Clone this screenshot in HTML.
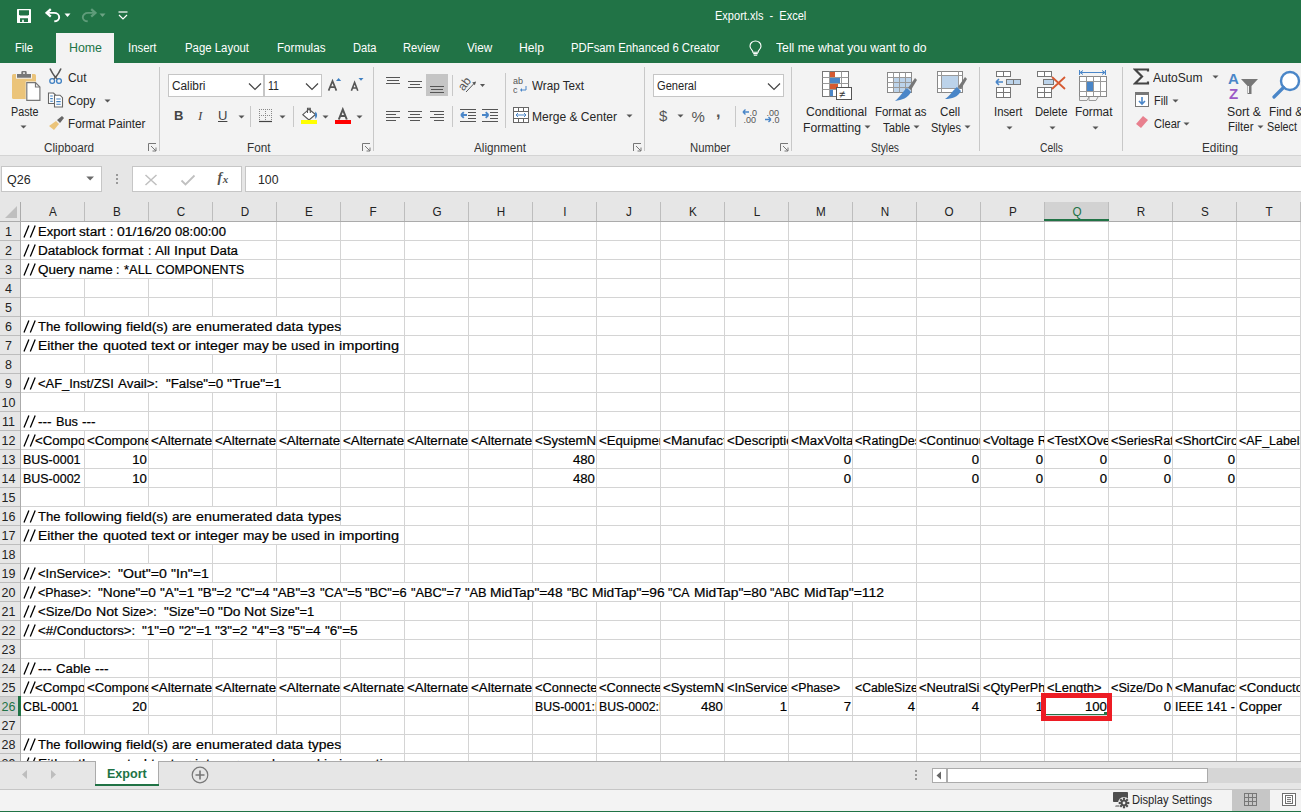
<!DOCTYPE html>
<html><head><meta charset="utf-8"><style>
html,body{margin:0;padding:0;width:1301px;height:812px;overflow:hidden;background:#fff;}
body{position:relative;font-family:"Liberation Sans",sans-serif;}
body div, body svg{position:absolute;}
body div div{position:absolute;}
</style></head><body>
<div style="left:0px;top:0px;width:1301px;height:63px;background:#217346;"></div>
<svg style="left:16px;top:8px;" width="16" height="16" viewBox="0 0 16 16"><rect x="1" y="1" width="14" height="14" rx="0.6" fill="#fff"/><path d="M3 2.2 H13 V6.6 L12 7.6 H4 L3 6.6 Z" fill="#217346"/><path d="M4 10.2 H12 V14 H7.8 V11.8 H6.2 V14 H4 Z" fill="#217346"/></svg>
<svg style="left:45px;top:8px;" width="17" height="16" viewBox="0 0 17 16"><path d="M5.8 1.2 L1.6 4.9 L5.8 8.6" fill="none" stroke="#fff" stroke-width="2.3" stroke-linejoin="miter"/><path d="M2.5 4.9 H9 C12 4.9 14.2 6.8 14.2 9.2 C14.2 11.6 12 13.3 9.3 13.3" fill="none" stroke="#fff" stroke-width="1.9"/></svg>
<svg style="left:64px;top:13px;" width="7" height="5" viewBox="0 0 7 5"><path d="M0.5 0.5 H6.5 L3.5 4 Z" fill="#fff"/></svg>
<svg style="left:80px;top:8px;" width="17" height="16" viewBox="0 0 17 16"><path d="M11.2 1.2 L15.4 4.9 L11.2 8.6" fill="none" stroke="#5f9c7a" stroke-width="2.3" stroke-linejoin="miter"/><path d="M14.5 4.9 H8 C5 4.9 2.8 6.8 2.8 9.2 C2.8 11.6 5 13.3 7.7 13.3" fill="none" stroke="#5f9c7a" stroke-width="1.9"/></svg>
<svg style="left:99px;top:13px;" width="7" height="5" viewBox="0 0 7 5"><path d="M0.5 0.5 H6.5 L3.5 4 Z" fill="#6da384"/></svg>
<svg style="left:118px;top:11px;" width="10" height="9" viewBox="0 0 10 9"><path d="M0.5 1 H9.5" stroke="#fff" stroke-width="1.2"/><path d="M1 4 L5 8 L9 4" fill="none" stroke="#fff" stroke-width="1.2"/></svg>
<div style="top:10.24px;font-size:12px;line-height:12px;color:#fff;white-space:pre;left:715.20px;transform:scaleX(0.9189);transform-origin:0 0;">Export.xls  -  Excel</div>
<div style="left:56px;top:33px;width:58px;height:30px;background:#f3f3f3;"></div>
<div style="top:42.14px;font-size:12px;line-height:12px;color:#fff;white-space:pre;left:15.00px;transform:scaleX(0.9310);transform-origin:0 0;">File</div>
<div style="top:42.14px;font-size:12px;line-height:12px;color:#217346;white-space:pre;left:68.50px;transform:scaleX(1.0309);transform-origin:0 0;">Home</div>
<div style="top:42.14px;font-size:12px;line-height:12px;color:#fff;white-space:pre;left:128.00px;transform:scaleX(0.9496);transform-origin:0 0;">Insert</div>
<div style="top:42.14px;font-size:12px;line-height:12px;color:#fff;white-space:pre;left:184.50px;transform:scaleX(0.9497);transform-origin:0 0;">Page Layout</div>
<div style="top:42.14px;font-size:12px;line-height:12px;color:#fff;white-space:pre;left:276.50px;transform:scaleX(0.9698);transform-origin:0 0;">Formulas</div>
<div style="top:42.14px;font-size:12px;line-height:12px;color:#fff;white-space:pre;left:352.50px;transform:scaleX(0.9271);transform-origin:0 0;">Data</div>
<div style="top:42.14px;font-size:12px;line-height:12px;color:#fff;white-space:pre;left:403.30px;transform:scaleX(0.9328);transform-origin:0 0;">Review</div>
<div style="top:42.14px;font-size:12px;line-height:12px;color:#fff;white-space:pre;left:466.80px;transform:scaleX(0.9770);transform-origin:0 0;">View</div>
<div style="top:42.14px;font-size:12px;line-height:12px;color:#fff;white-space:pre;left:519.00px;transform:scaleX(1.0130);transform-origin:0 0;">Help</div>
<div style="top:42.14px;font-size:12px;line-height:12px;color:#fff;white-space:pre;left:571.20px;transform:scaleX(0.9441);transform-origin:0 0;">PDFsam Enhanced 6 Creator</div>
<svg style="left:749px;top:40px;" width="13" height="16" viewBox="0 0 13 16"><path d="M6.5 1 C3.2 1 1 3.3 1 6.2 C1 8.4 2.4 9.6 3.6 11 L3.8 12.2 H9.2 L9.4 11 C10.6 9.6 12 8.4 12 6.2 C12 3.3 9.8 1 6.5 1 Z" fill="none" stroke="#fff" stroke-width="1.1"/><path d="M4.2 13.6 H8.8 M4.8 15.2 H8.2" stroke="#fff" stroke-width="1.1"/></svg>
<div style="top:42.14px;font-size:12px;line-height:12px;color:#fff;white-space:pre;left:775.70px;transform:scaleX(1.0164);transform-origin:0 0;">Tell me what you want to do</div>
<div style="left:0px;top:63px;width:1301px;height:92px;background:#f3f3f3;"></div>
<div style="left:0px;top:155px;width:1301px;height:1px;background:#d4d4d4;"></div>
<div style="left:159px;top:67px;width:1px;height:84px;background:#c8c8c8;"></div>
<div style="left:373px;top:67px;width:1px;height:84px;background:#c8c8c8;"></div>
<div style="left:644px;top:67px;width:1px;height:84px;background:#c8c8c8;"></div>
<div style="left:791px;top:67px;width:1px;height:84px;background:#c8c8c8;"></div>
<div style="left:979px;top:67px;width:1px;height:84px;background:#c8c8c8;"></div>
<div style="left:1122px;top:67px;width:1px;height:84px;background:#c8c8c8;"></div>
<div style="top:141.64px;font-size:12px;line-height:12px;color:#333;white-space:pre;left:43.50px;transform:scaleX(0.9754);transform-origin:0 0;">Clipboard</div>
<div style="top:141.64px;font-size:12px;line-height:12px;color:#333;white-space:pre;left:246.50px;transform:scaleX(0.9787);transform-origin:0 0;">Font</div>
<div style="top:141.64px;font-size:12px;line-height:12px;color:#333;white-space:pre;left:474.00px;transform:scaleX(0.9745);transform-origin:0 0;">Alignment</div>
<div style="top:141.64px;font-size:12px;line-height:12px;color:#333;white-space:pre;left:689.70px;transform:scaleX(0.9442);transform-origin:0 0;">Number</div>
<div style="top:141.64px;font-size:12px;line-height:12px;color:#333;white-space:pre;left:871.00px;transform:scaleX(0.8568);transform-origin:0 0;">Styles</div>
<div style="top:141.64px;font-size:12px;line-height:12px;color:#333;white-space:pre;left:1039.50px;transform:scaleX(0.8624);transform-origin:0 0;">Cells</div>
<div style="top:141.64px;font-size:12px;line-height:12px;color:#333;white-space:pre;left:1201.50px;transform:scaleX(0.9812);transform-origin:0 0;">Editing</div>
<svg style="left:148px;top:143px;" width="9" height="9" viewBox="0 0 9 9"><path d="M0.5 8 V0.5 H8" fill="none" stroke="#777" stroke-width="1"/><path d="M3 3 L8 8 M8 4.5 V8 H4.5" fill="none" stroke="#777" stroke-width="1"/></svg>
<svg style="left:362px;top:143px;" width="9" height="9" viewBox="0 0 9 9"><path d="M0.5 8 V0.5 H8" fill="none" stroke="#777" stroke-width="1"/><path d="M3 3 L8 8 M8 4.5 V8 H4.5" fill="none" stroke="#777" stroke-width="1"/></svg>
<svg style="left:633px;top:143px;" width="9" height="9" viewBox="0 0 9 9"><path d="M0.5 8 V0.5 H8" fill="none" stroke="#777" stroke-width="1"/><path d="M3 3 L8 8 M8 4.5 V8 H4.5" fill="none" stroke="#777" stroke-width="1"/></svg>
<svg style="left:780px;top:143px;" width="9" height="9" viewBox="0 0 9 9"><path d="M0.5 8 V0.5 H8" fill="none" stroke="#777" stroke-width="1"/><path d="M3 3 L8 8 M8 4.5 V8 H4.5" fill="none" stroke="#777" stroke-width="1"/></svg>
<svg style="left:11px;top:70px;" width="30" height="32" viewBox="0 0 30 32"><rect x="1" y="4" width="24" height="25" rx="1.6" fill="#ebc47a"/><rect x="5" y="2.5" width="16" height="6.2" fill="#f3f3f3"/><path d="M6 4 H10.3 V2.2 Q10.3 1 11.5 1 H14.5 Q15.7 1 15.7 2.2 V4 H20 V7.7 H6 Z" fill="#777"/><rect x="12.2" y="2.3" width="1.6" height="1.6" fill="#fff"/><path d="M14.7 11.5 H26 L30 15.5 V31.5 H14.7 Z" fill="#f3f3f3"/><path d="M15.8 12.6 H24.5 L28.9 17 V30.4 H15.8 Z" fill="#fff" stroke="#777" stroke-width="1.2"/><path d="M24.5 12.6 V17 H28.9" fill="none" stroke="#777" stroke-width="1.2"/></svg>
<div style="top:106.04px;font-size:12px;line-height:12px;color:#262626;white-space:pre;left:10.50px;transform:scaleX(0.8962);transform-origin:0 0;">Paste</div>
<svg style="left:20px;top:125px;" width="7" height="5" viewBox="0 0 7 5"><path d="M0.5 0.5 H6.5 L3.5 3.5 Z" fill="#555"/></svg>
<svg style="left:47px;top:67px;" width="17" height="18" viewBox="0 0 17 18"><path d="M3 1.5 Q5 6 8.5 10.5 M14 1.5 Q12 6 8.5 10.5" fill="none" stroke="#555" stroke-width="1.6"/><circle cx="5.2" cy="14" r="2.4" fill="none" stroke="#3f7fc1" stroke-width="1.3"/><circle cx="12" cy="14" r="2.4" fill="none" stroke="#3f7fc1" stroke-width="1.3"/><path d="M6.8 12 L8.5 10.3 L10.2 12" fill="none" stroke="#555" stroke-width="1.2"/></svg>
<div style="top:72.04px;font-size:12px;line-height:12px;color:#262626;white-space:pre;left:67.50px;transform:scaleX(0.9907);transform-origin:0 0;">Cut</div>
<svg style="left:47px;top:92px;" width="17" height="16" viewBox="0 0 17 16"><path d="M1.5 1 H6.5 L8.3 2.8 V11.5 H1.5 Z" fill="#fff" stroke="#666" stroke-width="1.1"/><path d="M3.2 4 H5.8 M3.2 6.6 H5.8 M3.2 9.2 H5.8" stroke="#3f7fc1" stroke-width="1.1"/><path d="M7.5 3.2 H13 L15.5 5.7 V15 H7.5 Z" fill="#fff" stroke="#666" stroke-width="1.1"/><path d="M9.3 7 H13.7 M9.3 9.6 H13.7 M9.3 12.2 H13.7" stroke="#3f7fc1" stroke-width="1.1"/></svg>
<div style="top:94.94px;font-size:12px;line-height:12px;color:#262626;white-space:pre;left:67.50px;transform:scaleX(0.9817);transform-origin:0 0;">Copy</div>
<svg style="left:104px;top:99px;" width="7" height="5" viewBox="0 0 7 5"><path d="M0.5 0.5 H6.5 L3.5 3.5 Z" fill="#555"/></svg>
<svg style="left:48px;top:115px;" width="17" height="16" viewBox="0 0 17 16"><path d="M9 5 L14 1 L16 3 L12 8 Z" fill="#666"/><path d="M8 6 L11 9 L6 15 L1 11 Z" fill="#ebc47a"/></svg>
<div style="top:118.44px;font-size:12px;line-height:12px;color:#262626;white-space:pre;left:67.50px;transform:scaleX(0.9766);transform-origin:0 0;">Format Painter</div>
<div style="left:168px;top:74px;width:96px;height:23px;background:#fff;box-sizing:border-box;border:1px solid #c6c6c6;"></div>
<div style="left:264px;top:74px;width:58px;height:23px;background:#fff;box-sizing:border-box;border:1px solid #c6c6c6;"></div>
<div style="top:80.44px;font-size:12px;line-height:12px;color:#262626;white-space:pre;left:171.50px;transform:scaleX(0.9851);transform-origin:0 0;">Calibri</div>
<div style="top:80.44px;font-size:12px;line-height:12px;color:#262626;white-space:pre;left:268.00px;transform:scaleX(0.8831);transform-origin:0 0;">11</div>
<svg style="left:248px;top:82px;" width="14" height="9" viewBox="0 0 14 9"><path d="M1 1.5 L7 7.5 L13 1.5" fill="none" stroke="#444" stroke-width="1.2"/></svg>
<svg style="left:305px;top:82px;" width="14" height="9" viewBox="0 0 14 9"><path d="M1 1.5 L7 7.5 L13 1.5" fill="none" stroke="#444" stroke-width="1.2"/></svg>
<svg style="left:326px;top:76px;" width="17" height="16" viewBox="0 0 17 16"><path d="M2.6 14.6 L6.5 5 L10.4 14.6 M4.2 11.2 H8.8" fill="none" stroke="#555" stroke-width="1.7"/><path d="M10 5 L12.6 2 L15.2 5 Z" fill="#3f7fc1"/></svg>
<svg style="left:349px;top:76px;" width="16" height="16" viewBox="0 0 16 16"><path d="M2.4 14.8 L5.6 6.5 L8.8 14.8 M3.8 12 H7.4" fill="none" stroke="#555" stroke-width="1.6"/><path d="M9.5 2 H14.5 L12 4.8 Z" fill="#3f7fc1"/></svg>
<div style="left:174px;top:108px;font-size:13px;line-height:15px;font-weight:bold;color:#444">B</div>
<div style="left:198px;top:108px;font-size:13px;line-height:15px;font-style:italic;color:#444;font-family:'Liberation Serif',serif">I</div>
<div style="left:218px;top:108px;font-size:13px;line-height:15px;text-decoration:underline;color:#444">U</div>
<svg style="left:238px;top:115px;" width="7" height="5" viewBox="0 0 7 5"><path d="M0.5 0.5 H6.5 L3.5 3.5 Z" fill="#555"/></svg>
<svg style="left:279px;top:115px;" width="7" height="5" viewBox="0 0 7 5"><path d="M0.5 0.5 H6.5 L3.5 3.5 Z" fill="#555"/></svg>
<svg style="left:322px;top:115px;" width="7" height="5" viewBox="0 0 7 5"><path d="M0.5 0.5 H6.5 L3.5 3.5 Z" fill="#555"/></svg>
<svg style="left:356px;top:115px;" width="7" height="5" viewBox="0 0 7 5"><path d="M0.5 0.5 H6.5 L3.5 3.5 Z" fill="#555"/></svg>
<div style="left:250px;top:106px;width:1px;height:21px;background:#c8c8c8;"></div>
<div style="left:293px;top:106px;width:1px;height:21px;background:#c8c8c8;"></div>
<svg style="left:258px;top:108px;" width="15" height="15" viewBox="0 0 15 15"><path d="M1.5 1 V13 M7.5 1 V13 M13.5 1 V13 M1 1.5 H14 M1 7.5 H14" fill="none" stroke="#888" stroke-width="1" stroke-dasharray="1 1"/><path d="M1 13.5 H14" stroke="#444" stroke-width="1.2"/></svg>
<svg style="left:300px;top:106px;" width="20" height="20" viewBox="0 0 20 20"><path d="M9 3.2 L15.5 8.5 L9 14 L2.8 8.7 Z" fill="#fff" stroke="#555" stroke-width="1.1"/><path d="M7.5 7 V2.2 H10.3 V7" fill="none" stroke="#555" stroke-width="1.1"/><path d="M15.3 5.5 C17.5 7 17.8 10.5 15.4 13 L15 8.8 Z" fill="#3f7fc1"/><rect x="1" y="14" width="16" height="4" fill="#ffff00"/></svg>
<svg style="left:334px;top:107px;" width="18" height="18" viewBox="0 0 18 18"><path d="M4.8 12.5 L8.8 2.5 L12.8 12.5 M6.3 9 H11.3" fill="none" stroke="#555" stroke-width="2"/><rect x="1" y="13" width="16" height="4" fill="#ff0000"/></svg>
<svg style="left:386px;top:77px;" width="16" height="10" viewBox="0 0 16 10"><rect x="0" y="0" width="14" height="1" fill="#555"/><rect x="1" y="3" width="12" height="1" fill="#555"/><rect x="0" y="6" width="14" height="1" fill="#555"/></svg>
<svg style="left:408px;top:81px;" width="16" height="10" viewBox="0 0 16 10"><rect x="0" y="0" width="14" height="1" fill="#555"/><rect x="2" y="3" width="10" height="1" fill="#555"/><rect x="0" y="6" width="14" height="1" fill="#555"/></svg>
<div style="left:426px;top:74px;width:22px;height:22px;background:#c5c5c5;"></div>
<svg style="left:430px;top:86px;" width="16" height="10" viewBox="0 0 16 10"><rect x="0" y="0" width="14" height="1" fill="#555"/><rect x="1" y="3" width="12" height="1" fill="#555"/><rect x="0" y="6" width="14" height="1" fill="#555"/></svg>
<div style="left:452px;top:75px;width:1px;height:21px;background:#c8c8c8;"></div>
<svg style="left:459px;top:74px;" width="28" height="20" viewBox="0 0 28 20"><text x="0" y="0" font-size="12" fill="#555" transform="translate(4.4 17.6) rotate(-52)" font-family="Liberation Sans">ab</text><path d="M7 18 L16 8.5" fill="none" stroke="#555" stroke-width="1"/><path d="M17 7.5 L13.2 8.6 L15.9 11.3 Z" fill="#555"/><path d="M21 10 H26 L23.5 13 Z" fill="#555"/></svg>
<div style="left:505px;top:73px;width:1px;height:55px;background:#c8c8c8;"></div>
<svg style="left:513px;top:76px;" width="16" height="18" viewBox="0 0 16 18"><text x="0" y="8" font-size="9" fill="#555" font-family="Liberation Sans">ab</text><text x="0" y="17" font-size="9" fill="#555" font-family="Liberation Sans">c</text><path d="M8 14 H13 V10" fill="none" stroke="#4a86c8" stroke-width="1"/><path d="M7 14 L9 12 V16 Z" fill="#4a86c8"/></svg>
<div style="top:80.04px;font-size:12px;line-height:12px;color:#262626;white-space:pre;left:532.00px;transform:scaleX(0.9705);transform-origin:0 0;">Wrap Text</div>
<svg style="left:386px;top:111px;" width="16" height="13" viewBox="0 0 16 13"><rect x="0" y="0" width="14" height="1" fill="#555"/><rect x="0" y="3" width="10" height="1" fill="#555"/><rect x="0" y="6" width="14" height="1" fill="#555"/><rect x="0" y="9" width="10" height="1" fill="#555"/></svg>
<svg style="left:408px;top:111px;" width="16" height="13" viewBox="0 0 16 13"><rect x="0" y="0" width="14" height="1" fill="#555"/><rect x="2" y="3" width="10" height="1" fill="#555"/><rect x="0" y="6" width="14" height="1" fill="#555"/><rect x="2" y="9" width="10" height="1" fill="#555"/></svg>
<svg style="left:430px;top:111px;" width="16" height="13" viewBox="0 0 16 13"><rect x="0" y="0" width="14" height="1" fill="#555"/><rect x="4" y="3" width="10" height="1" fill="#555"/><rect x="0" y="6" width="14" height="1" fill="#555"/><rect x="4" y="9" width="10" height="1" fill="#555"/></svg>
<div style="left:452px;top:106px;width:1px;height:21px;background:#c8c8c8;"></div>
<svg style="left:460px;top:108px;" width="17" height="15" viewBox="0 0 17 15"><path d="M0 1.5 H16 M8 4.5 H16 M8 7.5 H16 M8 10.5 H16 M0 13.5 H16" stroke="#555" stroke-width="1"/><path d="M1 7 H7 M1 7 L3.8 4.2 M1 7 L3.8 9.8" stroke="#4a86c8" stroke-width="1.8" fill="none"/></svg>
<svg style="left:482px;top:108px;" width="17" height="15" viewBox="0 0 17 15"><path d="M0 1.5 H16 M8 4.5 H16 M8 7.5 H16 M8 10.5 H16 M0 13.5 H16" stroke="#555" stroke-width="1"/><path d="M0 7 H6.5 M6.5 7 L3.7 4.2 M6.5 7 L3.7 9.8" stroke="#4a86c8" stroke-width="1.8" fill="none"/></svg>
<svg style="left:513px;top:107px;" width="16" height="16" viewBox="0 0 16 16"><rect x="0.5" y="0.5" width="15" height="15" fill="#fff" stroke="#666"/><path d="M0.5 4.5 H15.5 M0.5 11.5 H15.5 M5.5 0.5 V4.5 M10.5 0.5 V4.5 M5.5 11.5 V15.5 M10.5 11.5 V15.5" stroke="#666" stroke-width="1"/><path d="M3 8 H13 M3 8 L5 6 M3 8 L5 10 M13 8 L11 6 M13 8 L11 10" stroke="#4a86c8" stroke-width="1" fill="none"/></svg>
<div style="top:111.44px;font-size:12px;line-height:12px;color:#262626;white-space:pre;left:532.00px;transform:scaleX(1.0035);transform-origin:0 0;">Merge &amp; Center</div>
<svg style="left:626px;top:114px;" width="7" height="5" viewBox="0 0 7 5"><path d="M0.5 0.5 H6.5 L3.5 3.5 Z" fill="#555"/></svg>
<div style="left:653px;top:74px;width:131px;height:23px;background:#fff;box-sizing:border-box;border:1px solid #c6c6c6;"></div>
<div style="top:80.44px;font-size:12px;line-height:12px;color:#262626;white-space:pre;left:656.50px;transform:scaleX(0.9253);transform-origin:0 0;">General</div>
<svg style="left:767px;top:82px;" width="14" height="9" viewBox="0 0 14 9"><path d="M1 1.5 L7 7.5 L13 1.5" fill="none" stroke="#444" stroke-width="1.2"/></svg>
<div style="left:659px;top:107px;font-size:15px;line-height:17px;color:#555">$</div>
<svg style="left:677px;top:114px;" width="7" height="5" viewBox="0 0 7 5"><path d="M0.5 0.5 H6.5 L3.5 3.5 Z" fill="#555"/></svg>
<div style="left:691.5px;top:107.5px;font-size:15px;line-height:17px;color:#555">%</div>
<div style="left:716px;top:103px;font-size:16px;line-height:17px;color:#555;font-weight:bold">,</div>
<div style="left:735px;top:106px;width:1px;height:21px;background:#c8c8c8;"></div>
<svg style="left:742px;top:108px;" width="17" height="16" viewBox="0 0 17 16"><path d="M1 4 H7 M1 4 L3.5 1.5 M1 4 L3.5 6.5" stroke="#4a86c8" stroke-width="1.4" fill="none"/><text x="7.5" y="8" font-size="9" fill="#555" font-family="Liberation Sans">.0</text><text x="1.5" y="15" font-size="9" fill="#555" font-family="Liberation Sans">.00</text></svg>
<svg style="left:764px;top:108px;" width="17" height="16" viewBox="0 0 17 16"><text x="2.5" y="8" font-size="9" fill="#555" font-family="Liberation Sans">.00</text><path d="M1 11.5 H7 M7 11.5 L4.5 9 M7 11.5 L4.5 14" stroke="#4a86c8" stroke-width="1.4" fill="none"/><text x="8" y="15" font-size="9" fill="#555" font-family="Liberation Sans">.0</text></svg>
<svg style="left:821px;top:70px;" width="32" height="32" viewBox="0 0 32 32"><rect x="1.5" y="1.5" width="26" height="25" fill="#fff" stroke="#777"/><path d="M1.5 7.5 H27.5 M1.5 13.5 H27.5 M1.5 19.5 H27.5 M8.5 1.5 V26.5 M20.5 1.5 V26.5" stroke="#999" stroke-width="1"/><rect x="9" y="2" width="5" height="5" fill="#d65a32"/><rect x="9" y="8" width="10" height="5" fill="#4a86c8"/><rect x="9" y="14" width="8" height="5" fill="#d65a32"/><rect x="9" y="20" width="3" height="6" fill="#4a86c8"/><rect x="15.5" y="17.5" width="15" height="12" fill="#fff" stroke="#555"/><text x="18" y="28" font-size="11" fill="#333" font-family="Liberation Sans">&#8800;</text></svg>
<div style="top:106.24px;font-size:12px;line-height:12px;color:#262626;white-space:pre;left:805.50px;transform:scaleX(1.0160);transform-origin:0 0;">Conditional</div>
<div style="top:122.44px;font-size:12px;line-height:12px;color:#262626;white-space:pre;left:802.50px;transform:scaleX(1.0113);transform-origin:0 0;">Formatting</div>
<svg style="left:864px;top:125px;" width="7" height="5" viewBox="0 0 7 5"><path d="M0.5 0.5 H6.5 L3.5 3.5 Z" fill="#555"/></svg>
<svg style="left:886px;top:71px;" width="32" height="31" viewBox="0 0 32 31"><rect x="1.5" y="1.5" width="24" height="20" fill="#fff" stroke="#888"/><rect x="7" y="7" width="18" height="14" fill="#bcd3ea"/><path d="M1.5 6.5 H25.5 M1.5 11.5 H25.5 M1.5 16.5 H25.5 M7.5 1.5 V21.5 M13.5 1.5 V21.5 M19.5 1.5 V21.5" stroke="#999" stroke-width="1"/><path d="M22 17 L29 7 L31 9 L25 19 Z" fill="#777"/><path d="M21 17 L25 21 C22 27 16 29 9 30 C14 26 17 20 21 17 Z" fill="#4a86c8"/></svg>
<div style="top:106.24px;font-size:12px;line-height:12px;color:#262626;white-space:pre;left:874.50px;transform:scaleX(0.9535);transform-origin:0 0;">Format as</div>
<div style="top:122.44px;font-size:12px;line-height:12px;color:#262626;white-space:pre;left:883.00px;transform:scaleX(0.9412);transform-origin:0 0;">Table</div>
<svg style="left:913px;top:125px;" width="7" height="5" viewBox="0 0 7 5"><path d="M0.5 0.5 H6.5 L3.5 3.5 Z" fill="#555"/></svg>
<svg style="left:936px;top:70px;" width="32" height="30" viewBox="0 0 32 30"><rect x="1.5" y="1.5" width="25" height="21" fill="#fff" stroke="#888"/><rect x="6" y="6" width="16" height="12" fill="#bcd3ea"/><path d="M1.5 5.5 H26.5 M1.5 18.5 H26.5 M5.5 1.5 V22.5 M22.5 1.5 V22.5" stroke="#999" stroke-width="1"/><path d="M22 17 L29 7 L31 9 L25 19 Z" fill="#777"/><path d="M21 17 L25 21 C22 27 16 29 9 29 C14 26 17 20 21 17 Z" fill="#4a86c8"/></svg>
<div style="top:106.24px;font-size:12px;line-height:12px;color:#262626;white-space:pre;left:940.00px;transform:scaleX(0.9676);transform-origin:0 0;">Cell</div>
<div style="top:122.44px;font-size:12px;line-height:12px;color:#262626;white-space:pre;left:931.00px;transform:scaleX(0.9180);transform-origin:0 0;">Styles</div>
<svg style="left:964px;top:125px;" width="7" height="5" viewBox="0 0 7 5"><path d="M0.5 0.5 H6.5 L3.5 3.5 Z" fill="#555"/></svg>
<svg style="left:995px;top:70px;" width="28" height="29" viewBox="0 0 28 29"><rect x="1.5" y="1.5" width="14" height="5" fill="#fff" stroke="#777"/><path d="M8.5 1.5 V6.5" stroke="#777"/><rect x="11.5" y="9.5" width="14" height="5" fill="#bcd3ea" stroke="#777"/><path d="M18.5 9.5 V14.5" stroke="#777"/><path d="M1 12 H8 M1 12 L4 9 M1 12 L4 15" stroke="#4a86c8" stroke-width="1.6" fill="none"/><rect x="1.5" y="17.5" width="14" height="10" fill="#fff" stroke="#777"/><path d="M8.5 17.5 V27.5 M1.5 22.5 H15.5" stroke="#777"/></svg>
<div style="top:106.14px;font-size:12px;line-height:12px;color:#262626;white-space:pre;left:994.40px;transform:scaleX(0.9429);transform-origin:0 0;">Insert</div>
<svg style="left:1036px;top:70px;" width="31" height="30" viewBox="0 0 31 30"><rect x="1.5" y="1.5" width="14" height="5" fill="#fff" stroke="#777"/><path d="M8.5 1.5 V6.5" stroke="#777"/><rect x="7.5" y="9.5" width="10" height="5" fill="#bcd3ea" stroke="#777"/><rect x="1.5" y="17.5" width="14" height="10" fill="#fff" stroke="#777"/><path d="M8.5 17.5 V27.5 M1.5 22.5 H15.5" stroke="#777"/><path d="M16 7 L29 19 M29 7 L16 19" stroke="#d65a32" stroke-width="1.8"/></svg>
<div style="top:106.14px;font-size:12px;line-height:12px;color:#262626;white-space:pre;left:1034.50px;transform:scaleX(0.9370);transform-origin:0 0;">Delete</div>
<svg style="left:1078px;top:69px;" width="30" height="33" viewBox="0 0 30 33"><path d="M1.5 1 V6 M27.5 1 V6 M2 3.5 H27 M2 3.5 L5 1.5 M2 3.5 L5 5.5 M27 3.5 L24 1.5 M27 3.5 L24 5.5" stroke="#4a86c8" stroke-width="1" fill="none"/><rect x="1.5" y="7.5" width="27" height="20" fill="#fff" stroke="#888"/><path d="M1.5 12.5 H28.5 M1.5 22.5 H28.5 M8.5 7.5 V27.5 M15.5 7.5 V27.5 M22.5 7.5 V27.5" stroke="#999"/><rect x="9" y="13" width="6" height="9" fill="#4a86c8"/><path d="M1.5 27.5 V31.5 H9 L11 28 L11 31.5 H18 L20 28" fill="none" stroke="#999"/></svg>
<div style="top:106.14px;font-size:12px;line-height:12px;color:#262626;white-space:pre;left:1074.50px;transform:scaleX(0.9867);transform-origin:0 0;">Format</div>
<svg style="left:1006px;top:126px;" width="7" height="5" viewBox="0 0 7 5"><path d="M0.5 0.5 H6.5 L3.5 3.5 Z" fill="#555"/></svg>
<svg style="left:1049px;top:126px;" width="7" height="5" viewBox="0 0 7 5"><path d="M0.5 0.5 H6.5 L3.5 3.5 Z" fill="#555"/></svg>
<svg style="left:1092px;top:126px;" width="7" height="5" viewBox="0 0 7 5"><path d="M0.5 0.5 H6.5 L3.5 3.5 Z" fill="#555"/></svg>
<svg style="left:1133px;top:68px;" width="17" height="17" viewBox="0 0 17 17"><path d="M15 3.5 V1.5 H2 L9 8.5 L2 15.5 H15 V13.5" fill="none" stroke="#444" stroke-width="2.2"/></svg>
<div style="top:71.94px;font-size:12px;line-height:12px;color:#262626;white-space:pre;left:1153.00px;transform:scaleX(1.0028);transform-origin:0 0;">AutoSum</div>
<svg style="left:1212px;top:75px;" width="7" height="5" viewBox="0 0 7 5"><path d="M0.5 0.5 H6.5 L3.5 3.5 Z" fill="#555"/></svg>
<svg style="left:1134px;top:91px;" width="16" height="18" viewBox="0 0 16 18"><rect x="1.5" y="1.5" width="13" height="14" fill="#fff" stroke="#777"/><rect x="1" y="1" width="14" height="3" fill="#777"/><path d="M8 6 V13 M5 10 L8 13 L11 10" stroke="#4a86c8" stroke-width="1.6" fill="none"/></svg>
<div style="top:94.84px;font-size:12px;line-height:12px;color:#262626;white-space:pre;left:1153.50px;transform:scaleX(0.9134);transform-origin:0 0;">Fill</div>
<svg style="left:1172px;top:99px;" width="7" height="5" viewBox="0 0 7 5"><path d="M0.5 0.5 H6.5 L3.5 3.5 Z" fill="#555"/></svg>
<svg style="left:1134px;top:115px;" width="15" height="14" viewBox="0 0 15 14"><path d="M9 1 L14 5 L7 13 L2 9 Z" fill="#e8808e"/><path d="M1 9.5 L5 13" stroke="#f3f3f3" stroke-width="1.2"/></svg>
<div style="top:117.84px;font-size:12px;line-height:12px;color:#262626;white-space:pre;left:1153.50px;transform:scaleX(0.9241);transform-origin:0 0;">Clear</div>
<svg style="left:1183px;top:122px;" width="7" height="5" viewBox="0 0 7 5"><path d="M0.5 0.5 H6.5 L3.5 3.5 Z" fill="#555"/></svg>
<svg style="left:1228px;top:71px;" width="32" height="29" viewBox="0 0 32 29"><text x="0" y="12.5" font-size="15" font-weight="bold" fill="#4a86c8" font-family="Liberation Sans">A</text><text x="1" y="27.5" font-size="15" font-weight="bold" fill="#9b59c6" font-family="Liberation Sans">Z</text><path d="M13 8 H30 L23.5 15 V23 H19.5 V15 Z" fill="#777"/><path d="M20.5 15 V22" stroke="#f3f3f3" stroke-width="1"/></svg>
<div style="top:106.04px;font-size:12px;line-height:12px;color:#262626;white-space:pre;left:1227.00px;transform:scaleX(1.0195);transform-origin:0 0;">Sort &amp;</div>
<div style="top:121.44px;font-size:12px;line-height:12px;color:#262626;white-space:pre;left:1227.50px;transform:scaleX(0.9563);transform-origin:0 0;">Filter</div>
<svg style="left:1257px;top:125px;" width="7" height="5" viewBox="0 0 7 5"><path d="M0.5 0.5 H6.5 L3.5 3.5 Z" fill="#555"/></svg>
<svg style="left:1272px;top:70px;" width="29" height="30" viewBox="0 0 29 30"><circle cx="18" cy="11" r="9" fill="#fff" stroke="#4a86c8" stroke-width="2.4"/><path d="M11.5 17.5 L2 27" stroke="#4a86c8" stroke-width="3.2" stroke-linecap="round"/></svg>
<div style="top:106.04px;font-size:12px;line-height:12px;color:#262626;white-space:pre;left:1269.00px;transform:scaleX(0.9804);transform-origin:0 0;">Find &amp;</div>
<div style="top:121.44px;font-size:12px;line-height:12px;color:#262626;white-space:pre;left:1267.00px;transform:scaleX(0.8995);transform-origin:0 0;">Select</div>
<div style="left:0px;top:156px;width:1301px;height:46px;background:#e6e6e6;"></div>
<div style="left:1px;top:166px;width:101px;height:26px;background:#fff;box-sizing:border-box;border:1px solid #c6c6c6;"></div>
<div style="top:174.44px;font-size:12px;line-height:12px;color:#262626;white-space:pre;left:7.00px;transform:scaleX(1.0405);transform-origin:0 0;">Q26</div>
<svg style="left:85.5px;top:176px;" width="9" height="6" viewBox="0 0 9 6"><path d="M0.3 0.5 H8 L4.15 4.6 Z" fill="#6a6a6a"/></svg>
<div style="left:116px;top:174px;width:2px;height:2px;background:#999;"></div>
<div style="left:116px;top:178px;width:2px;height:2px;background:#999;"></div>
<div style="left:116px;top:182px;width:2px;height:2px;background:#999;"></div>
<div style="left:132px;top:166px;width:110px;height:26px;background:#fff;box-sizing:border-box;border:1px solid #c6c6c6;"></div>
<svg style="left:144px;top:174px;" width="14" height="12" viewBox="0 0 14 12"><path d="M1.5 1 L12.5 11 M12.5 1 L1.5 11" stroke="#c0c0c0" stroke-width="1.5"/></svg>
<svg style="left:180px;top:174px;" width="16" height="12" viewBox="0 0 16 12"><path d="M1.5 6.5 L5.5 10.5 L14.5 1.5" fill="none" stroke="#c0c0c0" stroke-width="1.8"/></svg>
<div style="left:217.5px;top:169.5px;font-size:14px;line-height:16px;font-style:italic;font-weight:bold;color:#505050;font-family:'Liberation Serif',serif">f<span style="font-size:11px;position:relative;top:1px;left:0.5px">x</span></div>
<div style="left:245px;top:166px;width:1056px;height:26px;background:#fff;box-sizing:border-box;border:1px solid #c6c6c6;border-right:none;"></div>
<div style="top:172.73px;font-size:13.2px;line-height:13.2px;color:#262626;white-space:pre;left:257.50px;transform:scaleX(0.9309);transform-origin:0 0;">100</div>
<div style="left:0px;top:202px;width:1301px;height:19px;background:#e6e6e6;"></div>
<div style="left:0px;top:221px;width:1301px;height:540px;background:#fff;"></div>
<div style="left:0px;top:222px;width:20px;height:539px;background:#e6e6e6;"></div>
<div style="left:20px;top:202px;width:1px;height:19px;background:#bdbdbd;"></div>
<div style="left:84px;top:202px;width:1px;height:19px;background:#bdbdbd;"></div>
<div style="left:148px;top:202px;width:1px;height:19px;background:#bdbdbd;"></div>
<div style="left:212px;top:202px;width:1px;height:19px;background:#bdbdbd;"></div>
<div style="left:276px;top:202px;width:1px;height:19px;background:#bdbdbd;"></div>
<div style="left:340px;top:202px;width:1px;height:19px;background:#bdbdbd;"></div>
<div style="left:404px;top:202px;width:1px;height:19px;background:#bdbdbd;"></div>
<div style="left:468px;top:202px;width:1px;height:19px;background:#bdbdbd;"></div>
<div style="left:532px;top:202px;width:1px;height:19px;background:#bdbdbd;"></div>
<div style="left:596px;top:202px;width:1px;height:19px;background:#bdbdbd;"></div>
<div style="left:660px;top:202px;width:1px;height:19px;background:#bdbdbd;"></div>
<div style="left:724px;top:202px;width:1px;height:19px;background:#bdbdbd;"></div>
<div style="left:788px;top:202px;width:1px;height:19px;background:#bdbdbd;"></div>
<div style="left:852px;top:202px;width:1px;height:19px;background:#bdbdbd;"></div>
<div style="left:916px;top:202px;width:1px;height:19px;background:#bdbdbd;"></div>
<div style="left:980px;top:202px;width:1px;height:19px;background:#bdbdbd;"></div>
<div style="left:1044px;top:202px;width:1px;height:19px;background:#bdbdbd;"></div>
<div style="left:1108px;top:202px;width:1px;height:19px;background:#bdbdbd;"></div>
<div style="left:1172px;top:202px;width:1px;height:19px;background:#bdbdbd;"></div>
<div style="left:1236px;top:202px;width:1px;height:19px;background:#bdbdbd;"></div>
<div style="left:1300px;top:202px;width:1px;height:19px;background:#bdbdbd;"></div>
<div style="left:0px;top:221px;width:1301px;height:1px;background:#ababab;"></div>
<div style="left:20px;top:202px;width:1px;height:559px;background:#ababab;"></div>
<svg style="left:4px;top:205px;" width="14" height="14" viewBox="0 0 14 14"><path d="M13 1 V13 H1 Z" fill="#bfbfbf"/></svg>
<div style="left:1045px;top:202px;width:63px;height:19px;background:#d2d2d2;"></div>
<div style="left:1044px;top:219px;width:65px;height:2px;background:#217346;"></div>
<div style="left:20.8px;top:204px;width:64px;text-align:center;font-size:13px;line-height:15px;color:#222;transform:scaleX(0.9)">A</div>
<div style="left:84.8px;top:204px;width:64px;text-align:center;font-size:13px;line-height:15px;color:#222;transform:scaleX(0.9)">B</div>
<div style="left:148.8px;top:204px;width:64px;text-align:center;font-size:13px;line-height:15px;color:#222;transform:scaleX(0.9)">C</div>
<div style="left:212.8px;top:204px;width:64px;text-align:center;font-size:13px;line-height:15px;color:#222;transform:scaleX(0.9)">D</div>
<div style="left:276.8px;top:204px;width:64px;text-align:center;font-size:13px;line-height:15px;color:#222;transform:scaleX(0.9)">E</div>
<div style="left:340.8px;top:204px;width:64px;text-align:center;font-size:13px;line-height:15px;color:#222;transform:scaleX(0.9)">F</div>
<div style="left:404.8px;top:204px;width:64px;text-align:center;font-size:13px;line-height:15px;color:#222;transform:scaleX(0.9)">G</div>
<div style="left:468.8px;top:204px;width:64px;text-align:center;font-size:13px;line-height:15px;color:#222;transform:scaleX(0.9)">H</div>
<div style="left:532.8px;top:204px;width:64px;text-align:center;font-size:13px;line-height:15px;color:#222;transform:scaleX(0.9)">I</div>
<div style="left:596.8px;top:204px;width:64px;text-align:center;font-size:13px;line-height:15px;color:#222;transform:scaleX(0.9)">J</div>
<div style="left:660.8px;top:204px;width:64px;text-align:center;font-size:13px;line-height:15px;color:#222;transform:scaleX(0.9)">K</div>
<div style="left:724.8px;top:204px;width:64px;text-align:center;font-size:13px;line-height:15px;color:#222;transform:scaleX(0.9)">L</div>
<div style="left:788.8px;top:204px;width:64px;text-align:center;font-size:13px;line-height:15px;color:#222;transform:scaleX(0.9)">M</div>
<div style="left:852.8px;top:204px;width:64px;text-align:center;font-size:13px;line-height:15px;color:#222;transform:scaleX(0.9)">N</div>
<div style="left:916.8px;top:204px;width:64px;text-align:center;font-size:13px;line-height:15px;color:#222;transform:scaleX(0.9)">O</div>
<div style="left:980.8px;top:204px;width:64px;text-align:center;font-size:13px;line-height:15px;color:#222;transform:scaleX(0.9)">P</div>
<div style="left:1044.8px;top:204px;width:64px;text-align:center;font-size:13px;line-height:15px;color:#217346;transform:scaleX(0.9)">Q</div>
<div style="left:1108.8px;top:204px;width:64px;text-align:center;font-size:13px;line-height:15px;color:#222;transform:scaleX(0.9)">R</div>
<div style="left:1172.8px;top:204px;width:64px;text-align:center;font-size:13px;line-height:15px;color:#222;transform:scaleX(0.9)">S</div>
<div style="left:1236.8px;top:204px;width:64px;text-align:center;font-size:13px;line-height:15px;color:#222;transform:scaleX(0.9)">T</div>
<div style="left:84px;top:222px;width:1px;height:539px;background:#d4d4d4;"></div>
<div style="left:148px;top:222px;width:1px;height:539px;background:#d4d4d4;"></div>
<div style="left:212px;top:222px;width:1px;height:539px;background:#d4d4d4;"></div>
<div style="left:276px;top:222px;width:1px;height:539px;background:#d4d4d4;"></div>
<div style="left:340px;top:222px;width:1px;height:539px;background:#d4d4d4;"></div>
<div style="left:404px;top:222px;width:1px;height:539px;background:#d4d4d4;"></div>
<div style="left:468px;top:222px;width:1px;height:539px;background:#d4d4d4;"></div>
<div style="left:532px;top:222px;width:1px;height:539px;background:#d4d4d4;"></div>
<div style="left:596px;top:222px;width:1px;height:539px;background:#d4d4d4;"></div>
<div style="left:660px;top:222px;width:1px;height:539px;background:#d4d4d4;"></div>
<div style="left:724px;top:222px;width:1px;height:539px;background:#d4d4d4;"></div>
<div style="left:788px;top:222px;width:1px;height:539px;background:#d4d4d4;"></div>
<div style="left:852px;top:222px;width:1px;height:539px;background:#d4d4d4;"></div>
<div style="left:916px;top:222px;width:1px;height:539px;background:#d4d4d4;"></div>
<div style="left:980px;top:222px;width:1px;height:539px;background:#d4d4d4;"></div>
<div style="left:1044px;top:222px;width:1px;height:539px;background:#d4d4d4;"></div>
<div style="left:1108px;top:222px;width:1px;height:539px;background:#d4d4d4;"></div>
<div style="left:1172px;top:222px;width:1px;height:539px;background:#d4d4d4;"></div>
<div style="left:1236px;top:222px;width:1px;height:539px;background:#d4d4d4;"></div>
<div style="left:1300px;top:222px;width:1px;height:539px;background:#d4d4d4;"></div>
<div style="left:21px;top:240px;width:1280px;height:1px;background:#d4d4d4;"></div>
<div style="left:0px;top:240px;width:20px;height:1px;background:#bdbdbd;"></div>
<div style="left:21px;top:259px;width:1280px;height:1px;background:#d4d4d4;"></div>
<div style="left:0px;top:259px;width:20px;height:1px;background:#bdbdbd;"></div>
<div style="left:21px;top:278px;width:1280px;height:1px;background:#d4d4d4;"></div>
<div style="left:0px;top:278px;width:20px;height:1px;background:#bdbdbd;"></div>
<div style="left:21px;top:297px;width:1280px;height:1px;background:#d4d4d4;"></div>
<div style="left:0px;top:297px;width:20px;height:1px;background:#bdbdbd;"></div>
<div style="left:21px;top:316px;width:1280px;height:1px;background:#d4d4d4;"></div>
<div style="left:0px;top:316px;width:20px;height:1px;background:#bdbdbd;"></div>
<div style="left:21px;top:335px;width:1280px;height:1px;background:#d4d4d4;"></div>
<div style="left:0px;top:335px;width:20px;height:1px;background:#bdbdbd;"></div>
<div style="left:21px;top:354px;width:1280px;height:1px;background:#d4d4d4;"></div>
<div style="left:0px;top:354px;width:20px;height:1px;background:#bdbdbd;"></div>
<div style="left:21px;top:373px;width:1280px;height:1px;background:#d4d4d4;"></div>
<div style="left:0px;top:373px;width:20px;height:1px;background:#bdbdbd;"></div>
<div style="left:21px;top:392px;width:1280px;height:1px;background:#d4d4d4;"></div>
<div style="left:0px;top:392px;width:20px;height:1px;background:#bdbdbd;"></div>
<div style="left:21px;top:411px;width:1280px;height:1px;background:#d4d4d4;"></div>
<div style="left:0px;top:411px;width:20px;height:1px;background:#bdbdbd;"></div>
<div style="left:21px;top:430px;width:1280px;height:1px;background:#d4d4d4;"></div>
<div style="left:0px;top:430px;width:20px;height:1px;background:#bdbdbd;"></div>
<div style="left:21px;top:449px;width:1280px;height:1px;background:#d4d4d4;"></div>
<div style="left:0px;top:449px;width:20px;height:1px;background:#bdbdbd;"></div>
<div style="left:21px;top:468px;width:1280px;height:1px;background:#d4d4d4;"></div>
<div style="left:0px;top:468px;width:20px;height:1px;background:#bdbdbd;"></div>
<div style="left:21px;top:487px;width:1280px;height:1px;background:#d4d4d4;"></div>
<div style="left:0px;top:487px;width:20px;height:1px;background:#bdbdbd;"></div>
<div style="left:21px;top:506px;width:1280px;height:1px;background:#d4d4d4;"></div>
<div style="left:0px;top:506px;width:20px;height:1px;background:#bdbdbd;"></div>
<div style="left:21px;top:525px;width:1280px;height:1px;background:#d4d4d4;"></div>
<div style="left:0px;top:525px;width:20px;height:1px;background:#bdbdbd;"></div>
<div style="left:21px;top:544px;width:1280px;height:1px;background:#d4d4d4;"></div>
<div style="left:0px;top:544px;width:20px;height:1px;background:#bdbdbd;"></div>
<div style="left:21px;top:563px;width:1280px;height:1px;background:#d4d4d4;"></div>
<div style="left:0px;top:563px;width:20px;height:1px;background:#bdbdbd;"></div>
<div style="left:21px;top:582px;width:1280px;height:1px;background:#d4d4d4;"></div>
<div style="left:0px;top:582px;width:20px;height:1px;background:#bdbdbd;"></div>
<div style="left:21px;top:601px;width:1280px;height:1px;background:#d4d4d4;"></div>
<div style="left:0px;top:601px;width:20px;height:1px;background:#bdbdbd;"></div>
<div style="left:21px;top:620px;width:1280px;height:1px;background:#d4d4d4;"></div>
<div style="left:0px;top:620px;width:20px;height:1px;background:#bdbdbd;"></div>
<div style="left:21px;top:639px;width:1280px;height:1px;background:#d4d4d4;"></div>
<div style="left:0px;top:639px;width:20px;height:1px;background:#bdbdbd;"></div>
<div style="left:21px;top:658px;width:1280px;height:1px;background:#d4d4d4;"></div>
<div style="left:0px;top:658px;width:20px;height:1px;background:#bdbdbd;"></div>
<div style="left:21px;top:677px;width:1280px;height:1px;background:#d4d4d4;"></div>
<div style="left:0px;top:677px;width:20px;height:1px;background:#bdbdbd;"></div>
<div style="left:21px;top:696px;width:1280px;height:1px;background:#d4d4d4;"></div>
<div style="left:0px;top:696px;width:20px;height:1px;background:#bdbdbd;"></div>
<div style="left:21px;top:715px;width:1280px;height:1px;background:#d4d4d4;"></div>
<div style="left:0px;top:715px;width:20px;height:1px;background:#bdbdbd;"></div>
<div style="left:21px;top:734px;width:1280px;height:1px;background:#d4d4d4;"></div>
<div style="left:0px;top:734px;width:20px;height:1px;background:#bdbdbd;"></div>
<div style="left:21px;top:753px;width:1280px;height:1px;background:#d4d4d4;"></div>
<div style="left:0px;top:753px;width:20px;height:1px;background:#bdbdbd;"></div>
<div style="left:0px;top:697px;width:20px;height:18px;background:#d2d2d2;"></div>
<div style="left:18px;top:696px;width:3px;height:20px;background:#217346;"></div>
<div style="left:-1.5px;top:225px;width:20px;text-align:center;font-size:12.5px;line-height:15px;color:#222">1</div>
<div style="left:-1.5px;top:244px;width:20px;text-align:center;font-size:12.5px;line-height:15px;color:#222">2</div>
<div style="left:-1.5px;top:263px;width:20px;text-align:center;font-size:12.5px;line-height:15px;color:#222">3</div>
<div style="left:-1.5px;top:282px;width:20px;text-align:center;font-size:12.5px;line-height:15px;color:#222">4</div>
<div style="left:-1.5px;top:301px;width:20px;text-align:center;font-size:12.5px;line-height:15px;color:#222">5</div>
<div style="left:-1.5px;top:320px;width:20px;text-align:center;font-size:12.5px;line-height:15px;color:#222">6</div>
<div style="left:-1.5px;top:339px;width:20px;text-align:center;font-size:12.5px;line-height:15px;color:#222">7</div>
<div style="left:-1.5px;top:358px;width:20px;text-align:center;font-size:12.5px;line-height:15px;color:#222">8</div>
<div style="left:-1.5px;top:377px;width:20px;text-align:center;font-size:12.5px;line-height:15px;color:#222">9</div>
<div style="left:-1.5px;top:396px;width:20px;text-align:center;font-size:12.5px;line-height:15px;color:#222">10</div>
<div style="left:-1.5px;top:415px;width:20px;text-align:center;font-size:12.5px;line-height:15px;color:#222">11</div>
<div style="left:-1.5px;top:434px;width:20px;text-align:center;font-size:12.5px;line-height:15px;color:#222">12</div>
<div style="left:-1.5px;top:453px;width:20px;text-align:center;font-size:12.5px;line-height:15px;color:#222">13</div>
<div style="left:-1.5px;top:472px;width:20px;text-align:center;font-size:12.5px;line-height:15px;color:#222">14</div>
<div style="left:-1.5px;top:491px;width:20px;text-align:center;font-size:12.5px;line-height:15px;color:#222">15</div>
<div style="left:-1.5px;top:510px;width:20px;text-align:center;font-size:12.5px;line-height:15px;color:#222">16</div>
<div style="left:-1.5px;top:529px;width:20px;text-align:center;font-size:12.5px;line-height:15px;color:#222">17</div>
<div style="left:-1.5px;top:548px;width:20px;text-align:center;font-size:12.5px;line-height:15px;color:#222">18</div>
<div style="left:-1.5px;top:567px;width:20px;text-align:center;font-size:12.5px;line-height:15px;color:#222">19</div>
<div style="left:-1.5px;top:586px;width:20px;text-align:center;font-size:12.5px;line-height:15px;color:#222">20</div>
<div style="left:-1.5px;top:605px;width:20px;text-align:center;font-size:12.5px;line-height:15px;color:#222">21</div>
<div style="left:-1.5px;top:624px;width:20px;text-align:center;font-size:12.5px;line-height:15px;color:#222">22</div>
<div style="left:-1.5px;top:643px;width:20px;text-align:center;font-size:12.5px;line-height:15px;color:#222">23</div>
<div style="left:-1.5px;top:662px;width:20px;text-align:center;font-size:12.5px;line-height:15px;color:#222">24</div>
<div style="left:-1.5px;top:681px;width:20px;text-align:center;font-size:12.5px;line-height:15px;color:#222">25</div>
<div style="left:-1.5px;top:700px;width:20px;text-align:center;font-size:12.5px;line-height:15px;color:#217346">26</div>
<div style="left:-1.5px;top:719px;width:20px;text-align:center;font-size:12.5px;line-height:15px;color:#222">27</div>
<div style="left:-1.5px;top:738px;width:20px;text-align:center;font-size:12.5px;line-height:15px;color:#222">28</div>
<div style="left:-1.5px;top:757px;width:20px;text-align:center;font-size:12.5px;line-height:15px;color:#222">29</div>
<div style="left:21px;top:222px;width:1280px;height:539px;overflow:hidden;">
<div style="left:0px;top:0px;width:255px;height:18px;background:#fff;"></div>
<svg style="left:1.5px;top:2.9000000000000057px;" width="14" height="13" viewBox="0 0 14 13"><path d="M1 12.6 L5.9 0.4 M7.3 12.6 L12.2 0.4" stroke="#000" stroke-width="1.3" fill="none"/></svg>
<div style="top:4.42px;font-size:12.5px;line-height:12.5px;color:#000;white-space:pre;left:16.96px;transform:scaleX(1.0433);transform-origin:0 0;-webkit-text-stroke:0.2px #000;">Export</div>
<div style="top:4.42px;font-size:12.5px;line-height:12.5px;color:#000;white-space:pre;left:58.49px;transform:scaleX(1.0948);transform-origin:0 0;-webkit-text-stroke:0.2px #000;">start</div>
<div style="top:4.42px;font-size:12.5px;line-height:12.5px;color:#000;white-space:pre;left:88.95px;transform:scaleX(0.9400);transform-origin:0 0;-webkit-text-stroke:0.2px #000;">:</div>
<div style="top:4.42px;font-size:12.5px;line-height:12.5px;color:#000;white-space:pre;left:96.07px;transform:scaleX(1.1174);transform-origin:0 0;-webkit-text-stroke:0.2px #000;">01/16/20</div>
<div style="top:4.42px;font-size:12.5px;line-height:12.5px;color:#000;white-space:pre;left:154.28px;transform:scaleX(1.0466);transform-origin:0 0;-webkit-text-stroke:0.2px #000;">08:00:00</div>
<div style="left:0px;top:19px;width:255px;height:18px;background:#fff;"></div>
<svg style="left:1.5px;top:21.900000000000006px;" width="14" height="13" viewBox="0 0 14 13"><path d="M1 12.6 L5.9 0.4 M7.3 12.6 L12.2 0.4" stroke="#000" stroke-width="1.3" fill="none"/></svg>
<div style="top:23.42px;font-size:12.5px;line-height:12.5px;color:#000;white-space:pre;left:17.09px;transform:scaleX(1.0851);transform-origin:0 0;-webkit-text-stroke:0.2px #000;">Datablock</div>
<div style="top:23.42px;font-size:12.5px;line-height:12.5px;color:#000;white-space:pre;left:81.40px;transform:scaleX(1.1640);transform-origin:0 0;-webkit-text-stroke:0.2px #000;">format</div>
<div style="top:23.42px;font-size:12.5px;line-height:12.5px;color:#000;white-space:pre;left:126.63px;transform:scaleX(0.9774);transform-origin:0 0;-webkit-text-stroke:0.2px #000;">:</div>
<div style="top:23.42px;font-size:12.5px;line-height:12.5px;color:#000;white-space:pre;left:134.02px;transform:scaleX(1.0747);transform-origin:0 0;-webkit-text-stroke:0.2px #000;">All</div>
<div style="top:23.42px;font-size:12.5px;line-height:12.5px;color:#000;white-space:pre;left:152.95px;transform:scaleX(1.1433);transform-origin:0 0;-webkit-text-stroke:0.2px #000;">Input</div>
<div style="top:23.42px;font-size:12.5px;line-height:12.5px;color:#000;white-space:pre;left:188.73px;transform:scaleX(1.0592);transform-origin:0 0;-webkit-text-stroke:0.2px #000;">Data</div>
<div style="left:0px;top:38px;width:255px;height:18px;background:#fff;"></div>
<svg style="left:1.5px;top:40.89999999999998px;" width="14" height="13" viewBox="0 0 14 13"><path d="M1 12.6 L5.9 0.4 M7.3 12.6 L12.2 0.4" stroke="#000" stroke-width="1.3" fill="none"/></svg>
<div style="top:42.42px;font-size:12.5px;line-height:12.5px;color:#000;white-space:pre;left:17.07px;transform:scaleX(1.0767);transform-origin:0 0;-webkit-text-stroke:0.2px #000;">Query</div>
<div style="top:42.42px;font-size:12.5px;line-height:12.5px;color:#000;white-space:pre;left:57.71px;transform:scaleX(1.0785);transform-origin:0 0;-webkit-text-stroke:0.2px #000;">name</div>
<div style="top:42.42px;font-size:12.5px;line-height:12.5px;color:#000;white-space:pre;left:95.41px;transform:scaleX(0.9738);transform-origin:0 0;-webkit-text-stroke:0.2px #000;">:</div>
<div style="top:42.42px;font-size:12.5px;line-height:12.5px;color:#000;white-space:pre;left:102.78px;transform:scaleX(1.0328);transform-origin:0 0;-webkit-text-stroke:0.2px #000;">*ALL</div>
<div style="top:42.42px;font-size:12.5px;line-height:12.5px;color:#000;white-space:pre;left:134.75px;transform:scaleX(0.9850);transform-origin:0 0;-webkit-text-stroke:0.2px #000;">COMPONENTS</div>
<div style="left:0px;top:95px;width:319px;height:18px;background:#fff;"></div>
<svg style="left:1.5px;top:97.89999999999998px;" width="14" height="13" viewBox="0 0 14 13"><path d="M1 12.6 L5.9 0.4 M7.3 12.6 L12.2 0.4" stroke="#000" stroke-width="1.3" fill="none"/></svg>
<div style="top:99.42px;font-size:12.5px;line-height:12.5px;color:#000;white-space:pre;left:17.16px;transform:scaleX(1.0452);transform-origin:0 0;-webkit-text-stroke:0.2px #000;">The</div>
<div style="top:99.42px;font-size:12.5px;line-height:12.5px;color:#000;white-space:pre;left:43.77px;transform:scaleX(1.1714);transform-origin:0 0;-webkit-text-stroke:0.2px #000;">following</div>
<div style="top:99.42px;font-size:12.5px;line-height:12.5px;color:#000;white-space:pre;left:104.83px;transform:scaleX(1.1209);transform-origin:0 0;-webkit-text-stroke:0.2px #000;">field(s)</div>
<div style="top:99.42px;font-size:12.5px;line-height:12.5px;color:#000;white-space:pre;left:150.96px;transform:scaleX(1.0892);transform-origin:0 0;-webkit-text-stroke:0.2px #000;">are</div>
<div style="top:99.42px;font-size:12.5px;line-height:12.5px;color:#000;white-space:pre;left:174.73px;transform:scaleX(1.1460);transform-origin:0 0;-webkit-text-stroke:0.2px #000;">enumerated</div>
<div style="top:99.42px;font-size:12.5px;line-height:12.5px;color:#000;white-space:pre;left:255.27px;transform:scaleX(1.1195);transform-origin:0 0;-webkit-text-stroke:0.2px #000;">data</div>
<div style="top:99.42px;font-size:12.5px;line-height:12.5px;color:#000;white-space:pre;left:286.59px;transform:scaleX(1.1081);transform-origin:0 0;-webkit-text-stroke:0.2px #000;">types</div>
<div style="left:0px;top:114px;width:383px;height:18px;background:#fff;"></div>
<svg style="left:1.5px;top:116.89999999999998px;" width="14" height="13" viewBox="0 0 14 13"><path d="M1 12.6 L5.9 0.4 M7.3 12.6 L12.2 0.4" stroke="#000" stroke-width="1.3" fill="none"/></svg>
<div style="top:118.42px;font-size:12.5px;line-height:12.5px;color:#000;white-space:pre;left:17.14px;transform:scaleX(1.1097);transform-origin:0 0;-webkit-text-stroke:0.2px #000;">Either</div>
<div style="top:118.42px;font-size:12.5px;line-height:12.5px;color:#000;white-space:pre;left:57.43px;transform:scaleX(1.1522);transform-origin:0 0;-webkit-text-stroke:0.2px #000;">the</div>
<div style="top:118.42px;font-size:12.5px;line-height:12.5px;color:#000;white-space:pre;left:81.51px;transform:scaleX(1.1512);transform-origin:0 0;-webkit-text-stroke:0.2px #000;">quoted</div>
<div style="top:118.42px;font-size:12.5px;line-height:12.5px;color:#000;white-space:pre;left:129.58px;transform:scaleX(1.1768);transform-origin:0 0;-webkit-text-stroke:0.2px #000;">text</div>
<div style="top:118.42px;font-size:12.5px;line-height:12.5px;color:#000;white-space:pre;left:157.35px;transform:scaleX(1.1423);transform-origin:0 0;-webkit-text-stroke:0.2px #000;">or</div>
<div style="top:118.42px;font-size:12.5px;line-height:12.5px;color:#000;white-space:pre;left:174.10px;transform:scaleX(1.1390);transform-origin:0 0;-webkit-text-stroke:0.2px #000;">integer</div>
<div style="top:118.42px;font-size:12.5px;line-height:12.5px;color:#000;white-space:pre;left:221.69px;transform:scaleX(1.0877);transform-origin:0 0;-webkit-text-stroke:0.2px #000;">may</div>
<div style="top:118.42px;font-size:12.5px;line-height:12.5px;color:#000;white-space:pre;left:251.44px;transform:scaleX(1.0738);transform-origin:0 0;-webkit-text-stroke:0.2px #000;">be</div>
<div style="top:118.42px;font-size:12.5px;line-height:12.5px;color:#000;white-space:pre;left:270.43px;transform:scaleX(1.0649);transform-origin:0 0;-webkit-text-stroke:0.2px #000;">used</div>
<div style="top:118.42px;font-size:12.5px;line-height:12.5px;color:#000;white-space:pre;left:303.35px;transform:scaleX(1.1158);transform-origin:0 0;-webkit-text-stroke:0.2px #000;">in</div>
<div style="top:118.42px;font-size:12.5px;line-height:12.5px;color:#000;white-space:pre;left:318.26px;transform:scaleX(1.1679);transform-origin:0 0;-webkit-text-stroke:0.2px #000;">importing</div>
<div style="left:0px;top:152px;width:319px;height:18px;background:#fff;"></div>
<svg style="left:1.5px;top:154.89999999999998px;" width="14" height="13" viewBox="0 0 14 13"><path d="M1 12.6 L5.9 0.4 M7.3 12.6 L12.2 0.4" stroke="#000" stroke-width="1.3" fill="none"/></svg>
<div style="top:156.42px;font-size:12.5px;line-height:12.5px;color:#000;white-space:pre;left:17.08px;transform:scaleX(1.0339);transform-origin:0 0;-webkit-text-stroke:0.2px #000;">&lt;AF_Inst/ZSI</div>
<div style="top:156.42px;font-size:12.5px;line-height:12.5px;color:#000;white-space:pre;left:96.85px;transform:scaleX(1.0707);transform-origin:0 0;-webkit-text-stroke:0.2px #000;">Avail&gt;:</div>
<div style="top:156.42px;font-size:12.5px;line-height:12.5px;color:#000;white-space:pre;left:144.53px;transform:scaleX(1.0657);transform-origin:0 0;-webkit-text-stroke:0.2px #000;">"False"=0</div>
<div style="top:156.42px;font-size:12.5px;line-height:12.5px;color:#000;white-space:pre;left:205.74px;transform:scaleX(1.1219);transform-origin:0 0;-webkit-text-stroke:0.2px #000;">"True"=1</div>
<div style="left:0px;top:190px;width:127px;height:18px;background:#fff;"></div>
<svg style="left:1.5px;top:192.89999999999998px;" width="14" height="13" viewBox="0 0 14 13"><path d="M1 12.6 L5.9 0.4 M7.3 12.6 L12.2 0.4" stroke="#000" stroke-width="1.3" fill="none"/></svg>
<div style="top:194.42px;font-size:12.5px;line-height:12.5px;color:#000;white-space:pre;left:17.20px;transform:scaleX(1.0877);transform-origin:0 0;-webkit-text-stroke:0.2px #000;">---</div>
<div style="top:194.42px;font-size:12.5px;line-height:12.5px;color:#000;white-space:pre;left:34.91px;transform:scaleX(1.0201);transform-origin:0 0;-webkit-text-stroke:0.2px #000;">Bus</div>
<div style="top:194.42px;font-size:12.5px;line-height:12.5px;color:#000;white-space:pre;left:61.02px;transform:scaleX(1.0877);transform-origin:0 0;-webkit-text-stroke:0.2px #000;">---</div>
<svg style="left:1.5px;top:211.89999999999998px;" width="14" height="13" viewBox="0 0 14 13"><path d="M1 12.6 L5.9 0.4 M7.3 12.6 L12.2 0.4" stroke="#000" stroke-width="1.3" fill="none"/></svg>
<div style="left:0px;top:209.42px;width:63px;height:20.5px;overflow:hidden;"><div style="top:4px;font-size:12.5px;line-height:12.5px;color:#000;white-space:pre;left:13.70px;transform:scaleX(1.0571);transform-origin:0 0;-webkit-text-stroke:0.2px #000;">&lt;Component&gt;</div></div>
<div style="left:64px;top:209.42px;width:63px;height:20.5px;overflow:hidden;"><div style="top:4px;font-size:12.5px;line-height:12.5px;color:#000;white-space:pre;left:1.50px;transform:scaleX(1.0544);transform-origin:0 0;-webkit-text-stroke:0.2px #000;">&lt;ComponentType&gt;</div></div>
<div style="left:128px;top:209.42px;width:63px;height:20.5px;overflow:hidden;"><div style="top:4px;font-size:12.5px;line-height:12.5px;color:#000;white-space:pre;left:1.50px;transform:scaleX(1.0679);transform-origin:0 0;-webkit-text-stroke:0.2px #000;">&lt;AlternateName1&gt;</div></div>
<div style="left:192px;top:209.42px;width:63px;height:20.5px;overflow:hidden;"><div style="top:4px;font-size:12.5px;line-height:12.5px;color:#000;white-space:pre;left:1.50px;transform:scaleX(1.0679);transform-origin:0 0;-webkit-text-stroke:0.2px #000;">&lt;AlternateName2&gt;</div></div>
<div style="left:256px;top:209.42px;width:63px;height:20.5px;overflow:hidden;"><div style="top:4px;font-size:12.5px;line-height:12.5px;color:#000;white-space:pre;left:1.50px;transform:scaleX(1.0679);transform-origin:0 0;-webkit-text-stroke:0.2px #000;">&lt;AlternateName3&gt;</div></div>
<div style="left:320px;top:209.42px;width:63px;height:20.5px;overflow:hidden;"><div style="top:4px;font-size:12.5px;line-height:12.5px;color:#000;white-space:pre;left:1.50px;transform:scaleX(1.0679);transform-origin:0 0;-webkit-text-stroke:0.2px #000;">&lt;AlternateName4&gt;</div></div>
<div style="left:384px;top:209.42px;width:63px;height:20.5px;overflow:hidden;"><div style="top:4px;font-size:12.5px;line-height:12.5px;color:#000;white-space:pre;left:1.50px;transform:scaleX(1.0679);transform-origin:0 0;-webkit-text-stroke:0.2px #000;">&lt;AlternateName5&gt;</div></div>
<div style="left:448px;top:209.42px;width:63px;height:20.5px;overflow:hidden;"><div style="top:4px;font-size:12.5px;line-height:12.5px;color:#000;white-space:pre;left:1.50px;transform:scaleX(1.0679);transform-origin:0 0;-webkit-text-stroke:0.2px #000;">&lt;AlternateName6&gt;</div></div>
<div style="left:512px;top:209.42px;width:63px;height:20.5px;overflow:hidden;"><div style="top:4px;font-size:12.5px;line-height:12.5px;color:#000;white-space:pre;left:1.50px;transform:scaleX(1.0525);transform-origin:0 0;-webkit-text-stroke:0.2px #000;">&lt;SystemNominalVoltage&gt;</div></div>
<div style="left:576px;top:209.42px;width:63px;height:20.5px;overflow:hidden;"><div style="top:4px;font-size:12.5px;line-height:12.5px;color:#000;white-space:pre;left:1.50px;transform:scaleX(1.0561);transform-origin:0 0;-webkit-text-stroke:0.2px #000;">&lt;EquipmentName&gt;</div></div>
<div style="left:640px;top:209.42px;width:63px;height:20.5px;overflow:hidden;"><div style="top:4px;font-size:12.5px;line-height:12.5px;color:#000;white-space:pre;left:1.50px;transform:scaleX(1.0884);transform-origin:0 0;-webkit-text-stroke:0.2px #000;">&lt;Manufacturer&gt;</div></div>
<div style="left:704px;top:209.42px;width:63px;height:20.5px;overflow:hidden;"><div style="top:4px;font-size:12.5px;line-height:12.5px;color:#000;white-space:pre;left:1.50px;transform:scaleX(1.0581);transform-origin:0 0;-webkit-text-stroke:0.2px #000;">&lt;Description&gt;</div></div>
<div style="left:768px;top:209.42px;width:63px;height:20.5px;overflow:hidden;"><div style="top:4px;font-size:12.5px;line-height:12.5px;color:#000;white-space:pre;left:1.50px;transform:scaleX(1.0620);transform-origin:0 0;-webkit-text-stroke:0.2px #000;">&lt;MaxVoltage&gt;</div></div>
<div style="left:832px;top:209.42px;width:63px;height:20.5px;overflow:hidden;"><div style="top:4px;font-size:12.5px;line-height:12.5px;color:#000;white-space:pre;left:1.50px;transform:scaleX(1.0050);transform-origin:0 0;-webkit-text-stroke:0.2px #000;">&lt;RatingDesc&gt;</div></div>
<div style="left:896px;top:209.42px;width:63px;height:20.5px;overflow:hidden;"><div style="top:4px;font-size:12.5px;line-height:12.5px;color:#000;white-space:pre;left:1.50px;transform:scaleX(1.0432);transform-origin:0 0;-webkit-text-stroke:0.2px #000;">&lt;ContinuousRating&gt;</div></div>
<div style="left:960px;top:209.42px;width:63px;height:20.5px;overflow:hidden;"><div style="top:4px;font-size:12.5px;line-height:12.5px;color:#000;white-space:pre;left:1.50px;transform:scaleX(1.0418);transform-origin:0 0;-webkit-text-stroke:0.2px #000;">&lt;Voltage Rating&gt;</div></div>
<div style="left:1024px;top:209.42px;width:63px;height:20.5px;overflow:hidden;"><div style="top:4px;font-size:12.5px;line-height:12.5px;color:#000;white-space:pre;left:1.50px;transform:scaleX(1.0280);transform-origin:0 0;-webkit-text-stroke:0.2px #000;">&lt;TestXOver&gt;</div></div>
<div style="left:1088px;top:209.42px;width:63px;height:20.5px;overflow:hidden;"><div style="top:4px;font-size:12.5px;line-height:12.5px;color:#000;white-space:pre;left:1.50px;transform:scaleX(1.0073);transform-origin:0 0;-webkit-text-stroke:0.2px #000;">&lt;SeriesRating&gt;</div></div>
<div style="left:1152px;top:209.42px;width:63px;height:20.5px;overflow:hidden;"><div style="top:4px;font-size:12.5px;line-height:12.5px;color:#000;white-space:pre;left:1.50px;transform:scaleX(1.0526);transform-origin:0 0;-webkit-text-stroke:0.2px #000;">&lt;ShortCircuit&gt;</div></div>
<div style="left:1216px;top:209.42px;width:63px;height:20.5px;overflow:hidden;"><div style="top:4px;font-size:12.5px;line-height:12.5px;color:#000;white-space:pre;left:1.50px;transform:scaleX(0.9950);transform-origin:0 0;-webkit-text-stroke:0.2px #000;">&lt;AF_Label&gt;</div></div>
<div style="top:232.42px;font-size:12.5px;line-height:12.5px;color:#000;white-space:pre;left:1.50px;transform:scaleX(0.9969);transform-origin:0 0;-webkit-text-stroke:0.2px #000;">BUS-0001</div>
<div style="top:232.42px;font-size:12.5px;line-height:12.5px;color:#000;white-space:pre;left:111.60px;transform:scaleX(1.0535);transform-origin:right 0;-webkit-text-stroke:0.2px #000;">10</div>
<div style="top:232.42px;font-size:12.5px;line-height:12.5px;color:#000;white-space:pre;left:552.65px;transform:scaleX(1.0535);transform-origin:right 0;-webkit-text-stroke:0.2px #000;">480</div>
<div style="top:232.42px;font-size:12.5px;line-height:12.5px;color:#000;white-space:pre;left:822.55px;transform:scaleX(1.0535);transform-origin:right 0;-webkit-text-stroke:0.2px #000;">0</div>
<div style="top:232.42px;font-size:12.5px;line-height:12.5px;color:#000;white-space:pre;left:950.55px;transform:scaleX(1.0535);transform-origin:right 0;-webkit-text-stroke:0.2px #000;">0</div>
<div style="top:232.42px;font-size:12.5px;line-height:12.5px;color:#000;white-space:pre;left:1014.55px;transform:scaleX(1.0535);transform-origin:right 0;-webkit-text-stroke:0.2px #000;">0</div>
<div style="top:232.42px;font-size:12.5px;line-height:12.5px;color:#000;white-space:pre;left:1078.55px;transform:scaleX(1.0535);transform-origin:right 0;-webkit-text-stroke:0.2px #000;">0</div>
<div style="top:232.42px;font-size:12.5px;line-height:12.5px;color:#000;white-space:pre;left:1142.55px;transform:scaleX(1.0535);transform-origin:right 0;-webkit-text-stroke:0.2px #000;">0</div>
<div style="top:232.42px;font-size:12.5px;line-height:12.5px;color:#000;white-space:pre;left:1206.55px;transform:scaleX(1.0535);transform-origin:right 0;-webkit-text-stroke:0.2px #000;">0</div>
<div style="top:251.42px;font-size:12.5px;line-height:12.5px;color:#000;white-space:pre;left:1.50px;transform:scaleX(0.9969);transform-origin:0 0;-webkit-text-stroke:0.2px #000;">BUS-0002</div>
<div style="top:251.42px;font-size:12.5px;line-height:12.5px;color:#000;white-space:pre;left:111.60px;transform:scaleX(1.0535);transform-origin:right 0;-webkit-text-stroke:0.2px #000;">10</div>
<div style="top:251.42px;font-size:12.5px;line-height:12.5px;color:#000;white-space:pre;left:552.65px;transform:scaleX(1.0535);transform-origin:right 0;-webkit-text-stroke:0.2px #000;">480</div>
<div style="top:251.42px;font-size:12.5px;line-height:12.5px;color:#000;white-space:pre;left:822.55px;transform:scaleX(1.0535);transform-origin:right 0;-webkit-text-stroke:0.2px #000;">0</div>
<div style="top:251.42px;font-size:12.5px;line-height:12.5px;color:#000;white-space:pre;left:950.55px;transform:scaleX(1.0535);transform-origin:right 0;-webkit-text-stroke:0.2px #000;">0</div>
<div style="top:251.42px;font-size:12.5px;line-height:12.5px;color:#000;white-space:pre;left:1014.55px;transform:scaleX(1.0535);transform-origin:right 0;-webkit-text-stroke:0.2px #000;">0</div>
<div style="top:251.42px;font-size:12.5px;line-height:12.5px;color:#000;white-space:pre;left:1078.55px;transform:scaleX(1.0535);transform-origin:right 0;-webkit-text-stroke:0.2px #000;">0</div>
<div style="top:251.42px;font-size:12.5px;line-height:12.5px;color:#000;white-space:pre;left:1142.55px;transform:scaleX(1.0535);transform-origin:right 0;-webkit-text-stroke:0.2px #000;">0</div>
<div style="top:251.42px;font-size:12.5px;line-height:12.5px;color:#000;white-space:pre;left:1206.55px;transform:scaleX(1.0535);transform-origin:right 0;-webkit-text-stroke:0.2px #000;">0</div>
<div style="left:0px;top:285px;width:319px;height:18px;background:#fff;"></div>
<svg style="left:1.5px;top:287.9px;" width="14" height="13" viewBox="0 0 14 13"><path d="M1 12.6 L5.9 0.4 M7.3 12.6 L12.2 0.4" stroke="#000" stroke-width="1.3" fill="none"/></svg>
<div style="top:289.42px;font-size:12.5px;line-height:12.5px;color:#000;white-space:pre;left:17.16px;transform:scaleX(1.0452);transform-origin:0 0;-webkit-text-stroke:0.2px #000;">The</div>
<div style="top:289.42px;font-size:12.5px;line-height:12.5px;color:#000;white-space:pre;left:43.77px;transform:scaleX(1.1714);transform-origin:0 0;-webkit-text-stroke:0.2px #000;">following</div>
<div style="top:289.42px;font-size:12.5px;line-height:12.5px;color:#000;white-space:pre;left:104.83px;transform:scaleX(1.1209);transform-origin:0 0;-webkit-text-stroke:0.2px #000;">field(s)</div>
<div style="top:289.42px;font-size:12.5px;line-height:12.5px;color:#000;white-space:pre;left:150.96px;transform:scaleX(1.0892);transform-origin:0 0;-webkit-text-stroke:0.2px #000;">are</div>
<div style="top:289.42px;font-size:12.5px;line-height:12.5px;color:#000;white-space:pre;left:174.73px;transform:scaleX(1.1460);transform-origin:0 0;-webkit-text-stroke:0.2px #000;">enumerated</div>
<div style="top:289.42px;font-size:12.5px;line-height:12.5px;color:#000;white-space:pre;left:255.27px;transform:scaleX(1.1195);transform-origin:0 0;-webkit-text-stroke:0.2px #000;">data</div>
<div style="top:289.42px;font-size:12.5px;line-height:12.5px;color:#000;white-space:pre;left:286.59px;transform:scaleX(1.1081);transform-origin:0 0;-webkit-text-stroke:0.2px #000;">types</div>
<div style="left:0px;top:304px;width:383px;height:18px;background:#fff;"></div>
<svg style="left:1.5px;top:306.9px;" width="14" height="13" viewBox="0 0 14 13"><path d="M1 12.6 L5.9 0.4 M7.3 12.6 L12.2 0.4" stroke="#000" stroke-width="1.3" fill="none"/></svg>
<div style="top:308.42px;font-size:12.5px;line-height:12.5px;color:#000;white-space:pre;left:17.14px;transform:scaleX(1.1097);transform-origin:0 0;-webkit-text-stroke:0.2px #000;">Either</div>
<div style="top:308.42px;font-size:12.5px;line-height:12.5px;color:#000;white-space:pre;left:57.43px;transform:scaleX(1.1522);transform-origin:0 0;-webkit-text-stroke:0.2px #000;">the</div>
<div style="top:308.42px;font-size:12.5px;line-height:12.5px;color:#000;white-space:pre;left:81.51px;transform:scaleX(1.1512);transform-origin:0 0;-webkit-text-stroke:0.2px #000;">quoted</div>
<div style="top:308.42px;font-size:12.5px;line-height:12.5px;color:#000;white-space:pre;left:129.58px;transform:scaleX(1.1768);transform-origin:0 0;-webkit-text-stroke:0.2px #000;">text</div>
<div style="top:308.42px;font-size:12.5px;line-height:12.5px;color:#000;white-space:pre;left:157.35px;transform:scaleX(1.1423);transform-origin:0 0;-webkit-text-stroke:0.2px #000;">or</div>
<div style="top:308.42px;font-size:12.5px;line-height:12.5px;color:#000;white-space:pre;left:174.10px;transform:scaleX(1.1390);transform-origin:0 0;-webkit-text-stroke:0.2px #000;">integer</div>
<div style="top:308.42px;font-size:12.5px;line-height:12.5px;color:#000;white-space:pre;left:221.69px;transform:scaleX(1.0877);transform-origin:0 0;-webkit-text-stroke:0.2px #000;">may</div>
<div style="top:308.42px;font-size:12.5px;line-height:12.5px;color:#000;white-space:pre;left:251.44px;transform:scaleX(1.0738);transform-origin:0 0;-webkit-text-stroke:0.2px #000;">be</div>
<div style="top:308.42px;font-size:12.5px;line-height:12.5px;color:#000;white-space:pre;left:270.43px;transform:scaleX(1.0649);transform-origin:0 0;-webkit-text-stroke:0.2px #000;">used</div>
<div style="top:308.42px;font-size:12.5px;line-height:12.5px;color:#000;white-space:pre;left:303.35px;transform:scaleX(1.1158);transform-origin:0 0;-webkit-text-stroke:0.2px #000;">in</div>
<div style="top:308.42px;font-size:12.5px;line-height:12.5px;color:#000;white-space:pre;left:318.26px;transform:scaleX(1.1679);transform-origin:0 0;-webkit-text-stroke:0.2px #000;">importing</div>
<div style="left:0px;top:342px;width:191px;height:18px;background:#fff;"></div>
<svg style="left:1.5px;top:344.9px;" width="14" height="13" viewBox="0 0 14 13"><path d="M1 12.6 L5.9 0.4 M7.3 12.6 L12.2 0.4" stroke="#000" stroke-width="1.3" fill="none"/></svg>
<div style="top:346.42px;font-size:12.5px;line-height:12.5px;color:#000;white-space:pre;left:17.05px;transform:scaleX(1.0381);transform-origin:0 0;-webkit-text-stroke:0.2px #000;">&lt;InService&gt;:</div>
<div style="top:346.42px;font-size:12.5px;line-height:12.5px;color:#000;white-space:pre;left:97.22px;transform:scaleX(1.1285);transform-origin:0 0;-webkit-text-stroke:0.2px #000;">"Out"=0</div>
<div style="top:346.42px;font-size:12.5px;line-height:12.5px;color:#000;white-space:pre;left:150.02px;transform:scaleX(1.1261);transform-origin:0 0;-webkit-text-stroke:0.2px #000;">"In"=1</div>
<div style="left:0px;top:361px;width:895px;height:18px;background:#fff;"></div>
<svg style="left:1.5px;top:363.9px;" width="14" height="13" viewBox="0 0 14 13"><path d="M1 12.6 L5.9 0.4 M7.3 12.6 L12.2 0.4" stroke="#000" stroke-width="1.3" fill="none"/></svg>
<div style="top:365.42px;font-size:12.5px;line-height:12.5px;color:#000;white-space:pre;left:17.00px;transform:scaleX(0.9918);transform-origin:0 0;-webkit-text-stroke:0.2px #000;">&lt;Phase&gt;:</div>
<div style="top:365.42px;font-size:12.5px;line-height:12.5px;color:#000;white-space:pre;left:77.27px;transform:scaleX(1.0919);transform-origin:0 0;-webkit-text-stroke:0.2px #000;">"None"=0</div>
<div style="top:365.42px;font-size:12.5px;line-height:12.5px;color:#000;white-space:pre;left:139.05px;transform:scaleX(1.0894);transform-origin:0 0;-webkit-text-stroke:0.2px #000;">"A"=1</div>
<div style="top:365.42px;font-size:12.5px;line-height:12.5px;color:#000;white-space:pre;left:177.22px;transform:scaleX(1.0733);transform-origin:0 0;-webkit-text-stroke:0.2px #000;">"B"=2</div>
<div style="top:365.42px;font-size:12.5px;line-height:12.5px;color:#000;white-space:pre;left:214.89px;transform:scaleX(1.0454);transform-origin:0 0;-webkit-text-stroke:0.2px #000;">"C"=4</div>
<div style="top:365.42px;font-size:12.5px;line-height:12.5px;color:#000;white-space:pre;left:252.40px;transform:scaleX(1.0606);transform-origin:0 0;-webkit-text-stroke:0.2px #000;">"AB"=3</div>
<div style="top:365.42px;font-size:12.5px;line-height:12.5px;color:#000;white-space:pre;left:298.51px;transform:scaleX(1.0387);transform-origin:0 0;-webkit-text-stroke:0.2px #000;">"CA"=5</div>
<div style="top:365.42px;font-size:12.5px;line-height:12.5px;color:#000;white-space:pre;left:344.47px;transform:scaleX(1.0262);transform-origin:0 0;-webkit-text-stroke:0.2px #000;">"BC"=6</div>
<div style="top:365.42px;font-size:12.5px;line-height:12.5px;color:#000;white-space:pre;left:389.92px;transform:scaleX(1.0240);transform-origin:0 0;-webkit-text-stroke:0.2px #000;">"ABC"=7</div>
<div style="top:365.42px;font-size:12.5px;line-height:12.5px;color:#000;white-space:pre;left:443.81px;transform:scaleX(1.0256);transform-origin:0 0;-webkit-text-stroke:0.2px #000;">"AB</div>
<div style="top:365.42px;font-size:12.5px;line-height:12.5px;color:#000;white-space:pre;left:469.36px;transform:scaleX(1.1016);transform-origin:0 0;-webkit-text-stroke:0.2px #000;">MidTap"=48</div>
<div style="top:365.42px;font-size:12.5px;line-height:12.5px;color:#000;white-space:pre;left:545.89px;transform:scaleX(0.9628);transform-origin:0 0;-webkit-text-stroke:0.2px #000;">"BC</div>
<div style="top:365.42px;font-size:12.5px;line-height:12.5px;color:#000;white-space:pre;left:570.78px;transform:scaleX(1.1016);transform-origin:0 0;-webkit-text-stroke:0.2px #000;">MidTap"=96</div>
<div style="top:365.42px;font-size:12.5px;line-height:12.5px;color:#000;white-space:pre;left:647.31px;transform:scaleX(0.9860);transform-origin:0 0;-webkit-text-stroke:0.2px #000;">"CA</div>
<div style="top:365.42px;font-size:12.5px;line-height:12.5px;color:#000;white-space:pre;left:672.70px;transform:scaleX(1.1016);transform-origin:0 0;-webkit-text-stroke:0.2px #000;">MidTap"=80</div>
<div style="top:365.42px;font-size:12.5px;line-height:12.5px;color:#000;white-space:pre;left:749.24px;transform:scaleX(0.9767);transform-origin:0 0;-webkit-text-stroke:0.2px #000;">"ABC</div>
<div style="top:365.42px;font-size:12.5px;line-height:12.5px;color:#000;white-space:pre;left:782.57px;transform:scaleX(1.1122);transform-origin:0 0;-webkit-text-stroke:0.2px #000;">MidTap"=112</div>
<div style="left:0px;top:380px;width:319px;height:18px;background:#fff;"></div>
<svg style="left:1.5px;top:382.9px;" width="14" height="13" viewBox="0 0 14 13"><path d="M1 12.6 L5.9 0.4 M7.3 12.6 L12.2 0.4" stroke="#000" stroke-width="1.3" fill="none"/></svg>
<div style="top:384.42px;font-size:12.5px;line-height:12.5px;color:#000;white-space:pre;left:17.09px;transform:scaleX(1.0482);transform-origin:0 0;-webkit-text-stroke:0.2px #000;">&lt;Size/Do</div>
<div style="top:384.42px;font-size:12.5px;line-height:12.5px;color:#000;white-space:pre;left:74.62px;transform:scaleX(1.1306);transform-origin:0 0;-webkit-text-stroke:0.2px #000;">Not</div>
<div style="top:384.42px;font-size:12.5px;line-height:12.5px;color:#000;white-space:pre;left:100.61px;transform:scaleX(0.9862);transform-origin:0 0;-webkit-text-stroke:0.2px #000;">Size&gt;:</div>
<div style="top:384.42px;font-size:12.5px;line-height:12.5px;color:#000;white-space:pre;left:142.61px;transform:scaleX(1.0590);transform-origin:0 0;-webkit-text-stroke:0.2px #000;">"Size"=0</div>
<div style="top:384.42px;font-size:12.5px;line-height:12.5px;color:#000;white-space:pre;left:196.85px;transform:scaleX(1.1041);transform-origin:0 0;-webkit-text-stroke:0.2px #000;">"Do</div>
<div style="top:384.42px;font-size:12.5px;line-height:12.5px;color:#000;white-space:pre;left:223.39px;transform:scaleX(1.1306);transform-origin:0 0;-webkit-text-stroke:0.2px #000;">Not</div>
<div style="top:384.42px;font-size:12.5px;line-height:12.5px;color:#000;white-space:pre;left:249.38px;transform:scaleX(1.0281);transform-origin:0 0;-webkit-text-stroke:0.2px #000;">Size"=1</div>
<div style="left:0px;top:399px;width:383px;height:18px;background:#fff;"></div>
<svg style="left:1.5px;top:401.9px;" width="14" height="13" viewBox="0 0 14 13"><path d="M1 12.6 L5.9 0.4 M7.3 12.6 L12.2 0.4" stroke="#000" stroke-width="1.3" fill="none"/></svg>
<div style="top:403.42px;font-size:12.5px;line-height:12.5px;color:#000;white-space:pre;left:16.94px;transform:scaleX(1.0517);transform-origin:0 0;-webkit-text-stroke:0.2px #000;">&lt;#/Conductors&gt;:</div>
<div style="top:403.42px;font-size:12.5px;line-height:12.5px;color:#000;white-space:pre;left:121.21px;transform:scaleX(1.0857);transform-origin:0 0;-webkit-text-stroke:0.2px #000;">"1"=0</div>
<div style="top:403.42px;font-size:12.5px;line-height:12.5px;color:#000;white-space:pre;left:157.70px;transform:scaleX(1.0857);transform-origin:0 0;-webkit-text-stroke:0.2px #000;">"2"=1</div>
<div style="top:403.42px;font-size:12.5px;line-height:12.5px;color:#000;white-space:pre;left:194.18px;transform:scaleX(1.0857);transform-origin:0 0;-webkit-text-stroke:0.2px #000;">"3"=2</div>
<div style="top:403.42px;font-size:12.5px;line-height:12.5px;color:#000;white-space:pre;left:230.67px;transform:scaleX(1.0857);transform-origin:0 0;-webkit-text-stroke:0.2px #000;">"4"=3</div>
<div style="top:403.42px;font-size:12.5px;line-height:12.5px;color:#000;white-space:pre;left:267.16px;transform:scaleX(1.0857);transform-origin:0 0;-webkit-text-stroke:0.2px #000;">"5"=4</div>
<div style="top:403.42px;font-size:12.5px;line-height:12.5px;color:#000;white-space:pre;left:303.64px;transform:scaleX(1.0857);transform-origin:0 0;-webkit-text-stroke:0.2px #000;">"6"=5</div>
<div style="left:0px;top:437px;width:127px;height:18px;background:#fff;"></div>
<svg style="left:1.5px;top:439.9px;" width="14" height="13" viewBox="0 0 14 13"><path d="M1 12.6 L5.9 0.4 M7.3 12.6 L12.2 0.4" stroke="#000" stroke-width="1.3" fill="none"/></svg>
<div style="top:441.42px;font-size:12.5px;line-height:12.5px;color:#000;white-space:pre;left:17.23px;transform:scaleX(1.0959);transform-origin:0 0;-webkit-text-stroke:0.2px #000;">---</div>
<div style="top:441.42px;font-size:12.5px;line-height:12.5px;color:#000;white-space:pre;left:35.07px;transform:scaleX(1.0619);transform-origin:0 0;-webkit-text-stroke:0.2px #000;">Cable</div>
<div style="top:441.42px;font-size:12.5px;line-height:12.5px;color:#000;white-space:pre;left:73.92px;transform:scaleX(1.0959);transform-origin:0 0;-webkit-text-stroke:0.2px #000;">---</div>
<svg style="left:1.5px;top:458.9px;" width="14" height="13" viewBox="0 0 14 13"><path d="M1 12.6 L5.9 0.4 M7.3 12.6 L12.2 0.4" stroke="#000" stroke-width="1.3" fill="none"/></svg>
<div style="left:0px;top:456.42px;width:63px;height:20.5px;overflow:hidden;"><div style="top:4px;font-size:12.5px;line-height:12.5px;color:#000;white-space:pre;left:13.70px;transform:scaleX(1.0571);transform-origin:0 0;-webkit-text-stroke:0.2px #000;">&lt;Component&gt;</div></div>
<div style="left:64px;top:456.42px;width:63px;height:20.5px;overflow:hidden;"><div style="top:4px;font-size:12.5px;line-height:12.5px;color:#000;white-space:pre;left:1.50px;transform:scaleX(1.0544);transform-origin:0 0;-webkit-text-stroke:0.2px #000;">&lt;ComponentType&gt;</div></div>
<div style="left:128px;top:456.42px;width:63px;height:20.5px;overflow:hidden;"><div style="top:4px;font-size:12.5px;line-height:12.5px;color:#000;white-space:pre;left:1.50px;transform:scaleX(1.0679);transform-origin:0 0;-webkit-text-stroke:0.2px #000;">&lt;AlternateName1&gt;</div></div>
<div style="left:192px;top:456.42px;width:63px;height:20.5px;overflow:hidden;"><div style="top:4px;font-size:12.5px;line-height:12.5px;color:#000;white-space:pre;left:1.50px;transform:scaleX(1.0679);transform-origin:0 0;-webkit-text-stroke:0.2px #000;">&lt;AlternateName2&gt;</div></div>
<div style="left:256px;top:456.42px;width:63px;height:20.5px;overflow:hidden;"><div style="top:4px;font-size:12.5px;line-height:12.5px;color:#000;white-space:pre;left:1.50px;transform:scaleX(1.0679);transform-origin:0 0;-webkit-text-stroke:0.2px #000;">&lt;AlternateName3&gt;</div></div>
<div style="left:320px;top:456.42px;width:63px;height:20.5px;overflow:hidden;"><div style="top:4px;font-size:12.5px;line-height:12.5px;color:#000;white-space:pre;left:1.50px;transform:scaleX(1.0679);transform-origin:0 0;-webkit-text-stroke:0.2px #000;">&lt;AlternateName4&gt;</div></div>
<div style="left:384px;top:456.42px;width:63px;height:20.5px;overflow:hidden;"><div style="top:4px;font-size:12.5px;line-height:12.5px;color:#000;white-space:pre;left:1.50px;transform:scaleX(1.0679);transform-origin:0 0;-webkit-text-stroke:0.2px #000;">&lt;AlternateName5&gt;</div></div>
<div style="left:448px;top:456.42px;width:63px;height:20.5px;overflow:hidden;"><div style="top:4px;font-size:12.5px;line-height:12.5px;color:#000;white-space:pre;left:1.50px;transform:scaleX(1.0679);transform-origin:0 0;-webkit-text-stroke:0.2px #000;">&lt;AlternateName6&gt;</div></div>
<div style="left:512px;top:456.42px;width:63px;height:20.5px;overflow:hidden;"><div style="top:4px;font-size:12.5px;line-height:12.5px;color:#000;white-space:pre;left:1.50px;transform:scaleX(1.0266);transform-origin:0 0;-webkit-text-stroke:0.2px #000;">&lt;ConnectedBus1&gt;</div></div>
<div style="left:576px;top:456.42px;width:63px;height:20.5px;overflow:hidden;"><div style="top:4px;font-size:12.5px;line-height:12.5px;color:#000;white-space:pre;left:1.50px;transform:scaleX(1.0266);transform-origin:0 0;-webkit-text-stroke:0.2px #000;">&lt;ConnectedBus2&gt;</div></div>
<div style="left:640px;top:456.42px;width:63px;height:20.5px;overflow:hidden;"><div style="top:4px;font-size:12.5px;line-height:12.5px;color:#000;white-space:pre;left:1.50px;transform:scaleX(1.0525);transform-origin:0 0;-webkit-text-stroke:0.2px #000;">&lt;SystemNominalVoltage&gt;</div></div>
<div style="left:704px;top:456.42px;width:63px;height:20.5px;overflow:hidden;"><div style="top:4px;font-size:12.5px;line-height:12.5px;color:#000;white-space:pre;left:1.50px;transform:scaleX(1.0148);transform-origin:0 0;-webkit-text-stroke:0.2px #000;">&lt;InService&gt;</div></div>
<div style="top:460.42px;font-size:12.5px;line-height:12.5px;color:#000;white-space:pre;left:769.50px;transform:scaleX(0.9846);transform-origin:0 0;-webkit-text-stroke:0.2px #000;">&lt;Phase&gt;</div>
<div style="left:832px;top:456.42px;width:63px;height:20.5px;overflow:hidden;"><div style="top:4px;font-size:12.5px;line-height:12.5px;color:#000;white-space:pre;left:1.50px;transform:scaleX(0.9784);transform-origin:0 0;-webkit-text-stroke:0.2px #000;">&lt;CableSize&gt;</div></div>
<div style="left:896px;top:456.42px;width:63px;height:20.5px;overflow:hidden;"><div style="top:4px;font-size:12.5px;line-height:12.5px;color:#000;white-space:pre;left:1.50px;transform:scaleX(1.0293);transform-origin:0 0;-webkit-text-stroke:0.2px #000;">&lt;NeutralSize&gt;</div></div>
<div style="left:960px;top:456.42px;width:63px;height:20.5px;overflow:hidden;"><div style="top:4px;font-size:12.5px;line-height:12.5px;color:#000;white-space:pre;left:1.50px;transform:scaleX(1.0126);transform-origin:0 0;-webkit-text-stroke:0.2px #000;">&lt;QtyPerPhase&gt;</div></div>
<div style="top:460.42px;font-size:12.5px;line-height:12.5px;color:#000;white-space:pre;left:1025.50px;transform:scaleX(1.0323);transform-origin:0 0;-webkit-text-stroke:0.2px #000;">&lt;Length&gt;</div>
<div style="left:1088px;top:456.42px;width:63px;height:20.5px;overflow:hidden;"><div style="top:4px;font-size:12.5px;line-height:12.5px;color:#000;white-space:pre;left:1.50px;transform:scaleX(1.0138);transform-origin:0 0;-webkit-text-stroke:0.2px #000;">&lt;Size/Do Not Size&gt;</div></div>
<div style="left:1152px;top:456.42px;width:63px;height:20.5px;overflow:hidden;"><div style="top:4px;font-size:12.5px;line-height:12.5px;color:#000;white-space:pre;left:1.50px;transform:scaleX(1.0884);transform-origin:0 0;-webkit-text-stroke:0.2px #000;">&lt;Manufacturer&gt;</div></div>
<div style="left:1216px;top:456.42px;width:63px;height:20.5px;overflow:hidden;"><div style="top:4px;font-size:12.5px;line-height:12.5px;color:#000;white-space:pre;left:1.50px;transform:scaleX(1.0538);transform-origin:0 0;-webkit-text-stroke:0.2px #000;">&lt;Conductor&gt;</div></div>
<div style="top:479.42px;font-size:12.5px;line-height:12.5px;color:#000;white-space:pre;left:1.50px;transform:scaleX(0.9836);transform-origin:0 0;-webkit-text-stroke:0.2px #000;">CBL-0001</div>
<div style="top:479.42px;font-size:12.5px;line-height:12.5px;color:#000;white-space:pre;left:111.60px;transform:scaleX(1.0535);transform-origin:right 0;-webkit-text-stroke:0.2px #000;">20</div>
<div style="left:512px;top:475.42px;width:63px;height:20.5px;overflow:hidden;"><div style="top:4px;font-size:12.5px;line-height:12.5px;color:#000;white-space:pre;left:1.50px;transform:scaleX(0.9802);transform-origin:0 0;-webkit-text-stroke:0.2px #000;">BUS-0001:BUS</div></div>
<div style="left:576px;top:475.42px;width:63px;height:20.5px;overflow:hidden;"><div style="top:4px;font-size:12.5px;line-height:12.5px;color:#000;white-space:pre;left:1.50px;transform:scaleX(0.9802);transform-origin:0 0;-webkit-text-stroke:0.2px #000;">BUS-0002:BUS</div></div>
<div style="top:479.42px;font-size:12.5px;line-height:12.5px;color:#000;white-space:pre;left:680.65px;transform:scaleX(1.0535);transform-origin:right 0;-webkit-text-stroke:0.2px #000;">480</div>
<div style="top:479.42px;font-size:12.5px;line-height:12.5px;color:#000;white-space:pre;left:758.55px;transform:scaleX(1.0535);transform-origin:right 0;-webkit-text-stroke:0.2px #000;">1</div>
<div style="top:479.42px;font-size:12.5px;line-height:12.5px;color:#000;white-space:pre;left:822.55px;transform:scaleX(1.0535);transform-origin:right 0;-webkit-text-stroke:0.2px #000;">7</div>
<div style="top:479.42px;font-size:12.5px;line-height:12.5px;color:#000;white-space:pre;left:886.55px;transform:scaleX(1.0535);transform-origin:right 0;-webkit-text-stroke:0.2px #000;">4</div>
<div style="top:479.42px;font-size:12.5px;line-height:12.5px;color:#000;white-space:pre;left:950.55px;transform:scaleX(1.0535);transform-origin:right 0;-webkit-text-stroke:0.2px #000;">4</div>
<div style="top:479.42px;font-size:12.5px;line-height:12.5px;color:#000;white-space:pre;left:1014.55px;transform:scaleX(1.0535);transform-origin:right 0;-webkit-text-stroke:0.2px #000;">1</div>
<div style="top:479.42px;font-size:12.5px;line-height:12.5px;color:#000;white-space:pre;left:1064.65px;transform:scaleX(1.0535);transform-origin:right 0;-webkit-text-stroke:0.2px #000;">100</div>
<div style="top:479.42px;font-size:12.5px;line-height:12.5px;color:#000;white-space:pre;left:1142.55px;transform:scaleX(1.0535);transform-origin:right 0;-webkit-text-stroke:0.2px #000;">0</div>
<div style="left:1152px;top:475.42px;width:63px;height:20.5px;overflow:hidden;"><div style="top:4px;font-size:12.5px;line-height:12.5px;color:#000;white-space:pre;left:1.50px;transform:scaleX(0.9888);transform-origin:0 0;-webkit-text-stroke:0.2px #000;">IEEE 141 - Copper</div></div>
<div style="top:479.42px;font-size:12.5px;line-height:12.5px;color:#000;white-space:pre;left:1217.50px;transform:scaleX(1.0425);transform-origin:0 0;-webkit-text-stroke:0.2px #000;">Copper</div>
<div style="left:0px;top:513px;width:319px;height:18px;background:#fff;"></div>
<svg style="left:1.5px;top:515.9px;" width="14" height="13" viewBox="0 0 14 13"><path d="M1 12.6 L5.9 0.4 M7.3 12.6 L12.2 0.4" stroke="#000" stroke-width="1.3" fill="none"/></svg>
<div style="top:517.42px;font-size:12.5px;line-height:12.5px;color:#000;white-space:pre;left:17.16px;transform:scaleX(1.0452);transform-origin:0 0;-webkit-text-stroke:0.2px #000;">The</div>
<div style="top:517.42px;font-size:12.5px;line-height:12.5px;color:#000;white-space:pre;left:43.77px;transform:scaleX(1.1714);transform-origin:0 0;-webkit-text-stroke:0.2px #000;">following</div>
<div style="top:517.42px;font-size:12.5px;line-height:12.5px;color:#000;white-space:pre;left:104.83px;transform:scaleX(1.1209);transform-origin:0 0;-webkit-text-stroke:0.2px #000;">field(s)</div>
<div style="top:517.42px;font-size:12.5px;line-height:12.5px;color:#000;white-space:pre;left:150.96px;transform:scaleX(1.0892);transform-origin:0 0;-webkit-text-stroke:0.2px #000;">are</div>
<div style="top:517.42px;font-size:12.5px;line-height:12.5px;color:#000;white-space:pre;left:174.73px;transform:scaleX(1.1460);transform-origin:0 0;-webkit-text-stroke:0.2px #000;">enumerated</div>
<div style="top:517.42px;font-size:12.5px;line-height:12.5px;color:#000;white-space:pre;left:255.27px;transform:scaleX(1.1195);transform-origin:0 0;-webkit-text-stroke:0.2px #000;">data</div>
<div style="top:517.42px;font-size:12.5px;line-height:12.5px;color:#000;white-space:pre;left:286.59px;transform:scaleX(1.1081);transform-origin:0 0;-webkit-text-stroke:0.2px #000;">types</div>
<div style="left:0px;top:532px;width:383px;height:18px;background:#fff;"></div>
<svg style="left:1.5px;top:534.9px;" width="14" height="13" viewBox="0 0 14 13"><path d="M1 12.6 L5.9 0.4 M7.3 12.6 L12.2 0.4" stroke="#000" stroke-width="1.3" fill="none"/></svg>
<div style="top:536.42px;font-size:12.5px;line-height:12.5px;color:#000;white-space:pre;left:17.14px;transform:scaleX(1.1097);transform-origin:0 0;-webkit-text-stroke:0.2px #000;">Either</div>
<div style="top:536.42px;font-size:12.5px;line-height:12.5px;color:#000;white-space:pre;left:57.43px;transform:scaleX(1.1522);transform-origin:0 0;-webkit-text-stroke:0.2px #000;">the</div>
<div style="top:536.42px;font-size:12.5px;line-height:12.5px;color:#000;white-space:pre;left:81.51px;transform:scaleX(1.1512);transform-origin:0 0;-webkit-text-stroke:0.2px #000;">quoted</div>
<div style="top:536.42px;font-size:12.5px;line-height:12.5px;color:#000;white-space:pre;left:129.58px;transform:scaleX(1.1768);transform-origin:0 0;-webkit-text-stroke:0.2px #000;">text</div>
<div style="top:536.42px;font-size:12.5px;line-height:12.5px;color:#000;white-space:pre;left:157.35px;transform:scaleX(1.1423);transform-origin:0 0;-webkit-text-stroke:0.2px #000;">or</div>
<div style="top:536.42px;font-size:12.5px;line-height:12.5px;color:#000;white-space:pre;left:174.10px;transform:scaleX(1.1390);transform-origin:0 0;-webkit-text-stroke:0.2px #000;">integer</div>
<div style="top:536.42px;font-size:12.5px;line-height:12.5px;color:#000;white-space:pre;left:221.69px;transform:scaleX(1.0877);transform-origin:0 0;-webkit-text-stroke:0.2px #000;">may</div>
<div style="top:536.42px;font-size:12.5px;line-height:12.5px;color:#000;white-space:pre;left:251.44px;transform:scaleX(1.0738);transform-origin:0 0;-webkit-text-stroke:0.2px #000;">be</div>
<div style="top:536.42px;font-size:12.5px;line-height:12.5px;color:#000;white-space:pre;left:270.43px;transform:scaleX(1.0649);transform-origin:0 0;-webkit-text-stroke:0.2px #000;">used</div>
<div style="top:536.42px;font-size:12.5px;line-height:12.5px;color:#000;white-space:pre;left:303.35px;transform:scaleX(1.1158);transform-origin:0 0;-webkit-text-stroke:0.2px #000;">in</div>
<div style="top:536.42px;font-size:12.5px;line-height:12.5px;color:#000;white-space:pre;left:318.26px;transform:scaleX(1.1679);transform-origin:0 0;-webkit-text-stroke:0.2px #000;">importing</div>
</div>
<div style="left:1041px;top:693px;width:71px;height:28px;background:transparent;box-sizing:border-box;border:5px solid #ed1c24;"></div>
<div style="left:1046px;top:714px;width:60px;height:1px;background:#217346;"></div>
<div style="left:1104px;top:712px;width:3px;height:3px;background:#217346;"></div>
<div style="left:0px;top:761px;width:1301px;height:28px;background:#e6e6e6;"></div>
<div style="left:0px;top:761px;width:1301px;height:1px;background:#ababab;"></div>
<svg style="left:21px;top:769px;" width="7" height="11" viewBox="0 0 7 11"><path d="M6 1 L1 5.5 L6 10 Z" fill="#bdbdbd"/></svg>
<svg style="left:50px;top:769px;" width="7" height="11" viewBox="0 0 7 11"><path d="M1 1 L6 5.5 L1 10 Z" fill="#bdbdbd"/></svg>
<div style="left:95px;top:761px;width:64px;height:25px;background:#fff;box-sizing:border-box;border-left:1px solid #ababab;border-right:1px solid #ababab;"></div>
<div style="left:95px;top:784px;width:64px;height:2px;background:#217346;"></div>
<div style="top:768.26px;font-size:12.8px;line-height:12.8px;color:#217346;white-space:pre;font-weight:bold;left:107.30px;transform:scaleX(0.9793);transform-origin:0 0;">Export</div>
<svg style="left:191px;top:766px;" width="18" height="18" viewBox="0 0 18 18"><circle cx="9" cy="9" r="7.8" fill="none" stroke="#777" stroke-width="1.2"/><path d="M9 4.5 V13.5 M4.5 9 H13.5" stroke="#777" stroke-width="1.6"/></svg>
<div style="left:915px;top:770px;width:2px;height:2px;background:#999;"></div>
<div style="left:915px;top:774px;width:2px;height:2px;background:#999;"></div>
<div style="left:915px;top:778px;width:2px;height:2px;background:#999;"></div>
<div style="left:932px;top:768px;width:15px;height:15px;background:#fff;box-sizing:border-box;border:1px solid #ababab;"></div>
<svg style="left:936px;top:771px;" width="6" height="9" viewBox="0 0 6 9"><path d="M5 0.5 L0.5 4.5 L5 8.5 Z" fill="#666"/></svg>
<div style="left:946px;top:768px;width:262px;height:15px;background:#fff;box-sizing:border-box;border:1px solid #ababab;border-left:2px solid #ababab;"></div>
<div style="left:1208px;top:768px;width:93px;height:15px;background:#d6d6d6;"></div>
<div style="left:0px;top:789px;width:1301px;height:1px;background:#c6c6c6;"></div>
<div style="left:0px;top:790px;width:1301px;height:21px;background:#f3f3f3;"></div>
<div style="left:0px;top:811px;width:1301px;height:1px;background:#217346;"></div>
<svg style="left:1112px;top:791px;" width="18" height="18" viewBox="0 0 18 18"><rect x="1" y="1" width="15" height="10" rx="0.8" fill="#4d4d4d"/><circle cx="12" cy="12" r="6" fill="#f3f3f3"/><path d="M3 15.5 H7.5 L7 14.5 H3.8 Z" fill="#4d4d4d"/><rect x="15.10" y="10.90" width="2.2" height="2.2" fill="#4d4d4d" transform="rotate(0 16.20 12.00)"/><rect x="13.87" y="13.87" width="2.2" height="2.2" fill="#4d4d4d" transform="rotate(45 14.97 14.97)"/><rect x="10.90" y="15.10" width="2.2" height="2.2" fill="#4d4d4d" transform="rotate(90 12.00 16.20)"/><rect x="7.93" y="13.87" width="2.2" height="2.2" fill="#4d4d4d" transform="rotate(135 9.03 14.97)"/><rect x="6.70" y="10.90" width="2.2" height="2.2" fill="#4d4d4d" transform="rotate(180 7.80 12.00)"/><rect x="7.93" y="7.93" width="2.2" height="2.2" fill="#4d4d4d" transform="rotate(225 9.03 9.03)"/><rect x="10.90" y="6.70" width="2.2" height="2.2" fill="#4d4d4d" transform="rotate(270 12.00 7.80)"/><rect x="13.87" y="7.93" width="2.2" height="2.2" fill="#4d4d4d" transform="rotate(315 14.97 9.03)"/><circle cx="12" cy="12" r="3.3" fill="#4d4d4d"/><circle cx="12" cy="12" r="1.4" fill="#f3f3f3"/></svg>
<div style="top:794.34px;font-size:12px;line-height:12px;color:#262626;white-space:pre;left:1132.00px;transform:scaleX(0.9298);transform-origin:0 0;">Display Settings</div>
<div style="left:1232px;top:790px;width:38px;height:21px;background:#c6c6c6;"></div>
<svg style="left:1244px;top:793px;" width="13" height="13" viewBox="0 0 13 13"><rect x="0.5" y="0.5" width="12" height="12" fill="none" stroke="#777"/><path d="M4.5 0.5 V12.5 M8.5 0.5 V12.5 M0.5 4.5 H12.5 M0.5 8.5 H12.5" stroke="#777"/></svg>
<svg style="left:1282px;top:793px;" width="14" height="13" viewBox="0 0 14 13"><rect x="0.5" y="0.5" width="13" height="12" fill="#fff" stroke="#6e6e6e"/><rect x="3.5" y="2.5" width="7" height="8" fill="none" stroke="#6e6e6e"/><path d="M5 4.6 H9 M5 6.6 H9 M5 8.6 H9" stroke="#6e6e6e" stroke-width="1"/></svg>
</body></html>
